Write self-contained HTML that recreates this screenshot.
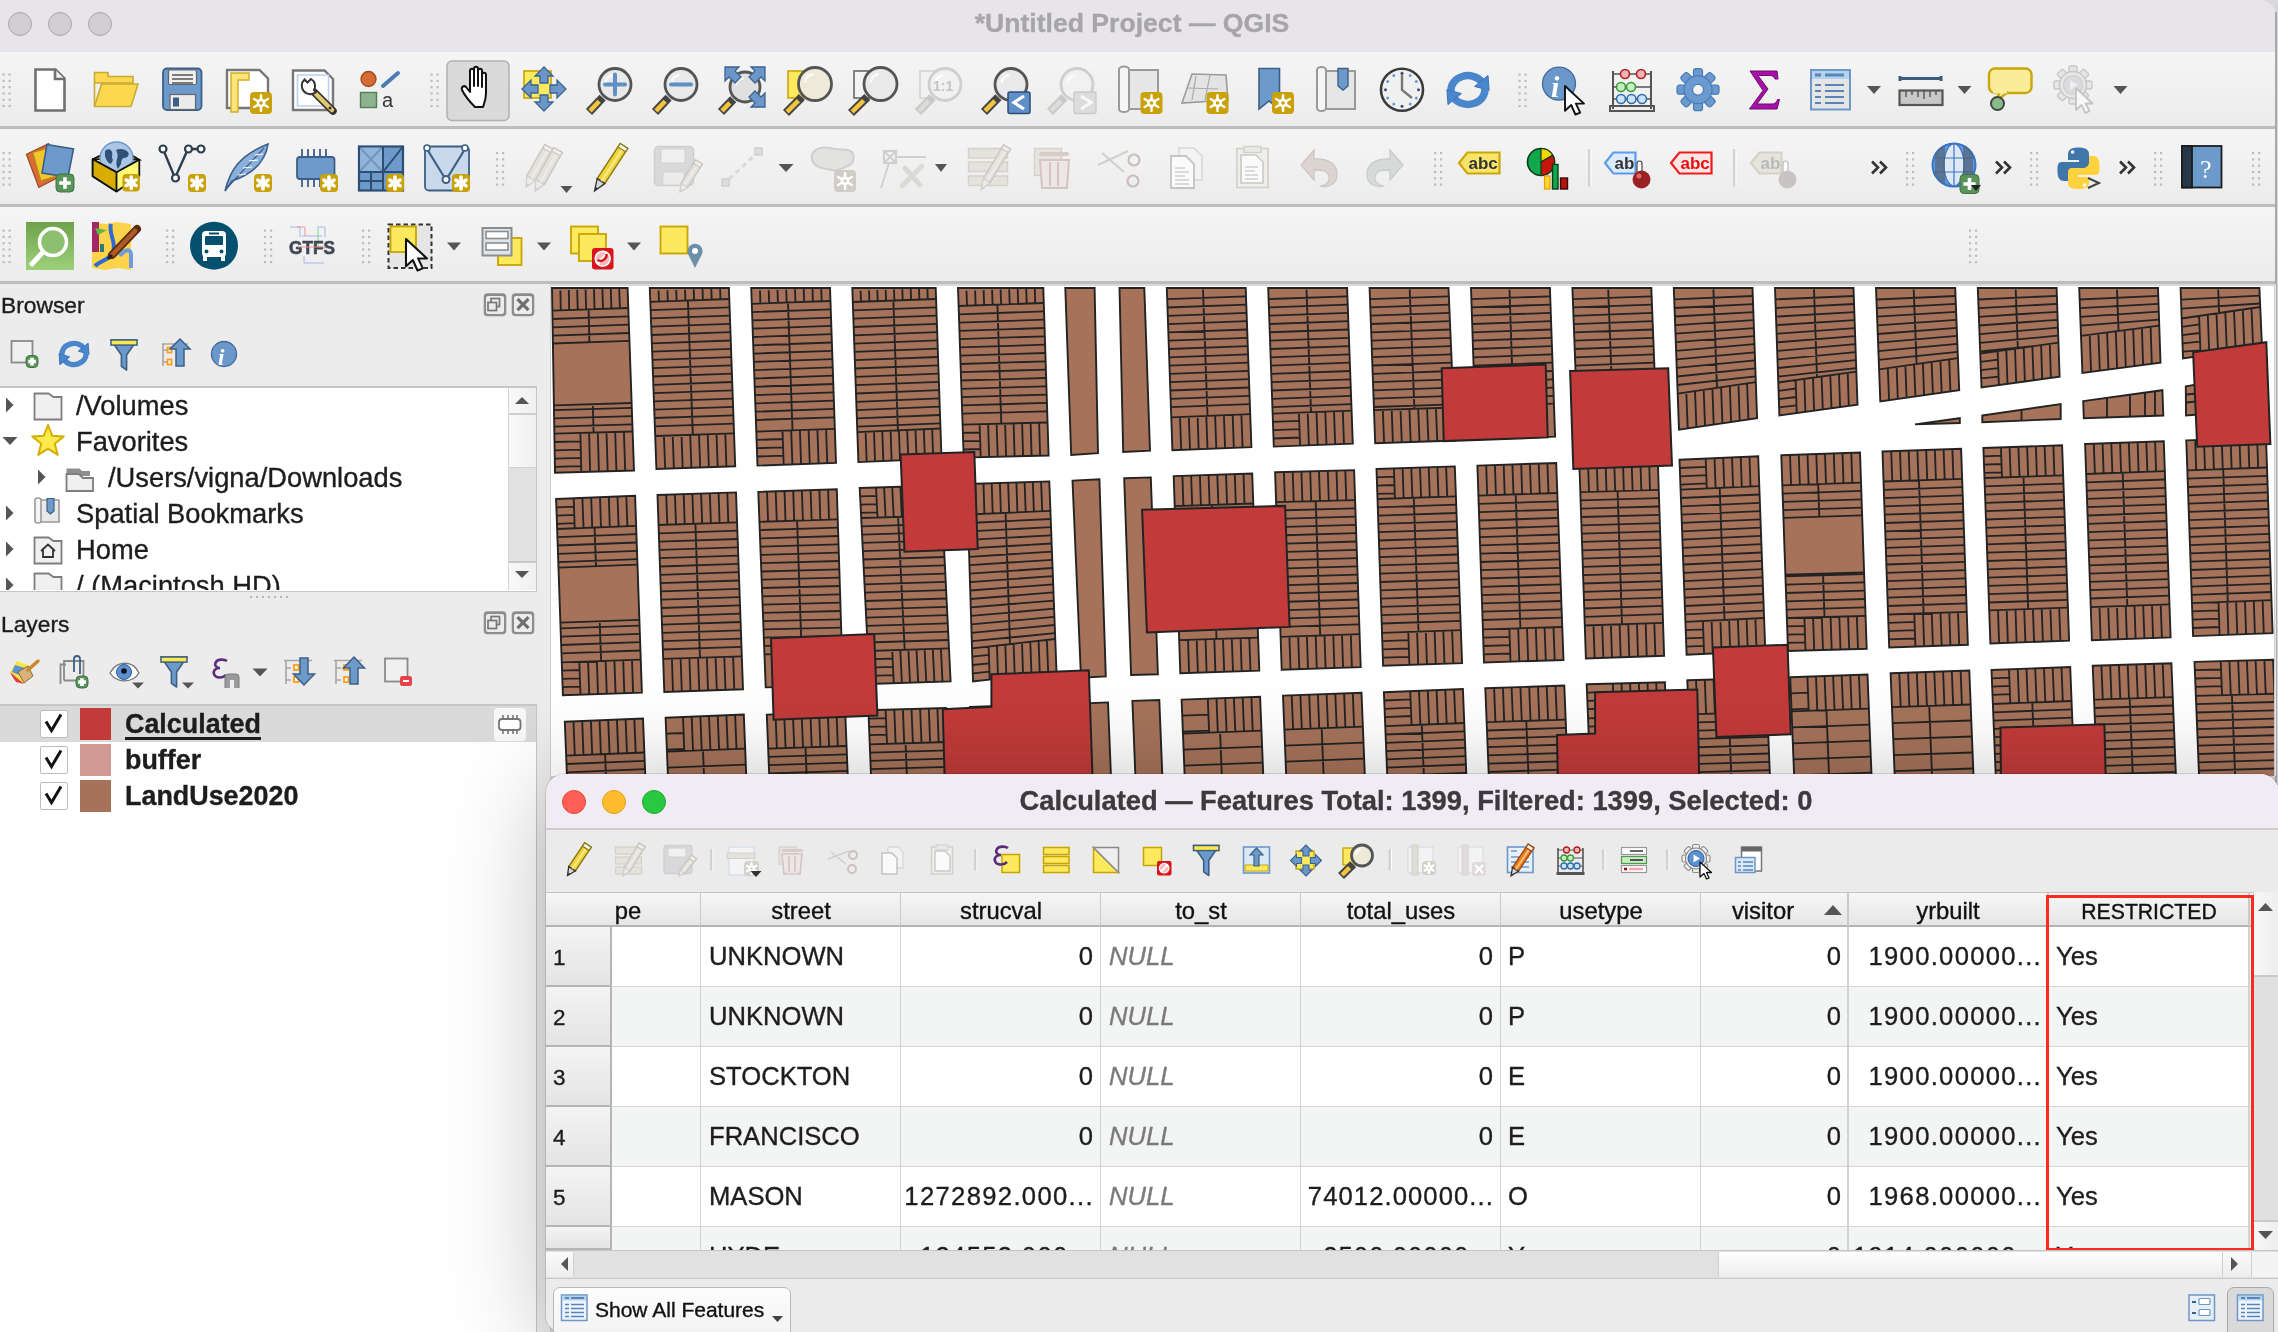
<!DOCTYPE html><html><head><meta charset="utf-8"><style>
html,body{margin:0;padding:0;width:2278px;height:1332px;overflow:hidden;background:#ececec;font-family:"Liberation Sans",sans-serif}
.t{position:absolute;white-space:nowrap;line-height:1;will-change:transform;-webkit-text-stroke:0.35px currentColor}
.b{position:absolute;box-sizing:border-box}
.ic{position:absolute;overflow:visible}
</style></head><body>
<div class="b" style="left:0.0px;top:0.0px;width:2278.0px;height:1332.0px;background:#d9d8db"></div>
<div class="b" style="left:0.0px;top:0.0px;width:2276.0px;height:52.0px;background:#e7e5e9;border-top-right-radius:16px"></div>
<div class="b" style="left:8.0px;top:12.0px;width:24.0px;height:24.0px;border-radius:50%;background:#d0ced2;border:1.2px solid #a9a7ab"></div>
<div class="b" style="left:48.0px;top:12.0px;width:24.0px;height:24.0px;border-radius:50%;background:#d0ced2;border:1.2px solid #a9a7ab"></div>
<div class="b" style="left:88.0px;top:12.0px;width:24.0px;height:24.0px;border-radius:50%;background:#d0ced2;border:1.2px solid #a9a7ab"></div>
<div class="t" style="left:732.0px;top:9.8px;width:800px;text-align:center;font-size:26.60px;color:#a7a5a9;font-weight:bold;font-style:normal;">*Untitled Project — QGIS</div>
<div class="b" style="left:2275.0px;top:12.0px;width:1.6px;height:1320.0px;background:#a9a8ab"></div>
<div class="b" style="left:0.0px;top:52.0px;width:2275.0px;height:74.0px;background:linear-gradient(#f5f5f5,#ececec)"></div>
<div class="b" style="left:0.0px;top:129.0px;width:2275.0px;height:75.0px;background:linear-gradient(#f5f5f5,#ececec)"></div>
<div class="b" style="left:0.0px;top:207.0px;width:2275.0px;height:74.0px;background:linear-gradient(#f5f5f5,#ececec)"></div>
<div class="b" style="left:0.0px;top:126.0px;width:2275.0px;height:2.5px;background:#bdbdbd"></div>
<div class="b" style="left:0.0px;top:204.0px;width:2275.0px;height:2.5px;background:#bdbdbd"></div>
<div class="b" style="left:0.0px;top:281.0px;width:2275.0px;height:2.5px;background:#bdbdbd"></div>
<svg class="ic" style="left:0;top:0" width="2278" height="284"><rect x="2.5" y="73.5" width="2.2" height="2.2" fill="#bdbdbd"/><rect x="8.5" y="73.5" width="2.2" height="2.2" fill="#bdbdbd"/><rect x="2.5" y="79.8" width="2.2" height="2.2" fill="#bdbdbd"/><rect x="8.5" y="79.8" width="2.2" height="2.2" fill="#bdbdbd"/><rect x="2.5" y="86.1" width="2.2" height="2.2" fill="#bdbdbd"/><rect x="8.5" y="86.1" width="2.2" height="2.2" fill="#bdbdbd"/><rect x="2.5" y="92.4" width="2.2" height="2.2" fill="#bdbdbd"/><rect x="8.5" y="92.4" width="2.2" height="2.2" fill="#bdbdbd"/><rect x="2.5" y="98.7" width="2.2" height="2.2" fill="#bdbdbd"/><rect x="8.5" y="98.7" width="2.2" height="2.2" fill="#bdbdbd"/><rect x="2.5" y="105.0" width="2.2" height="2.2" fill="#bdbdbd"/><rect x="8.5" y="105.0" width="2.2" height="2.2" fill="#bdbdbd"/><path d="M35.5 69.5H55.5L64.5 78.5V110.5H35.5Z" fill="#fff" stroke="#707070" stroke-width="2.6"/><path d="M55 69.5V79H64.5" fill="#f0f0f0" stroke="#707070" stroke-width="2.6"/><path d="M94.5 106.5V72.5H108V76.5H133V83H94.5Z" fill="#fdd84f" stroke="#c8ab36" stroke-width="1.6"/><path d="M94.5 106.5L101.5 84H138L131 106.5Z" fill="#fdd84f" stroke="#c8ab36" stroke-width="1.6"/><rect x="163" y="68.5" width="38.5" height="41.5" rx="4" fill="#6c9bcb" stroke="#3e5f85" stroke-width="1.8"/><rect x="168.5" y="70" width="28" height="14.5" rx="1.5" fill="#f0f0f0" stroke="#666" stroke-width="1.2"/><path d="M172 75h21M172 79h21M172 83h21" stroke="#555" stroke-width="1.3"/><rect x="170" y="94.5" width="25.5" height="15" fill="#ececec" stroke="#666" stroke-width="1.2"/><rect x="173" y="97.5" width="6" height="9" fill="#3e5f85"/><path d="M227 70H259.5L268 78.5V108H227Z" fill="#fff" stroke="#777" stroke-width="2.4"/><path d="M231 73H249V80H238V112H231Z" fill="#fce57d" stroke="#d3ae23" stroke-width="1.4"/><rect x="250.0" y="92.0" width="22.0" height="22.0" rx="4" fill="#c9a209"/><g stroke="#fff" stroke-width="2.4" stroke-linecap="round"><line x1="261.0" y1="103.0" x2="261.0" y2="110.9"/><line x1="261.0" y1="103.0" x2="254.1" y2="107.0"/><line x1="261.0" y1="103.0" x2="254.1" y2="99.0"/><line x1="261.0" y1="103.0" x2="261.0" y2="95.1"/><line x1="261.0" y1="103.0" x2="267.9" y2="99.0"/><line x1="261.0" y1="103.0" x2="267.9" y2="107.0"/></g><circle cx="261.0" cy="103.0" r="4.4" fill="#fff"/><circle cx="261.0" cy="103.0" r="1.8" fill="#c9a209"/><path d="M293 70.5H324.5L333 79V110H293Z" fill="#fff" stroke="#777" stroke-width="2.4"/><rect x="297.5" y="75" width="31" height="31" fill="none" stroke="#b9cdf2" stroke-width="1.5"/><path d="M314 92L333 111" stroke="#333" stroke-width="7.5" stroke-linecap="round"/><path d="M316 94L332 110" stroke="#e3c86d" stroke-width="4.5" stroke-linecap="round"/><path d="M304.5 79.5a8 8 0 0 0 11.5 12.5l-2 -2a8 8 0 0 0 -3 -11l-3.5 3.5l-3 -3z" fill="#fff" stroke="#333" stroke-width="2"/><circle cx="330" cy="108" r="1.5" fill="#333"/><circle cx="368.5" cy="79" r="7.5" fill="#d66b36" stroke="#9b4a23" stroke-width="1.3"/><path d="M383 86L398 73" stroke="#4c7bb3" stroke-width="4" stroke-linecap="round"/><rect x="360.5" y="92.5" width="16" height="15" fill="#8fb28e" stroke="#4f7f4f" stroke-width="1.4"/><text x="382" y="107" font-family="Liberation Sans" font-size="20" fill="#333">a</text><rect x="430.5" y="73.5" width="2.2" height="2.2" fill="#bdbdbd"/><rect x="436.5" y="73.5" width="2.2" height="2.2" fill="#bdbdbd"/><rect x="430.5" y="79.8" width="2.2" height="2.2" fill="#bdbdbd"/><rect x="436.5" y="79.8" width="2.2" height="2.2" fill="#bdbdbd"/><rect x="430.5" y="86.1" width="2.2" height="2.2" fill="#bdbdbd"/><rect x="436.5" y="86.1" width="2.2" height="2.2" fill="#bdbdbd"/><rect x="430.5" y="92.4" width="2.2" height="2.2" fill="#bdbdbd"/><rect x="436.5" y="92.4" width="2.2" height="2.2" fill="#bdbdbd"/><rect x="430.5" y="98.7" width="2.2" height="2.2" fill="#bdbdbd"/><rect x="436.5" y="98.7" width="2.2" height="2.2" fill="#bdbdbd"/><rect x="430.5" y="105.0" width="2.2" height="2.2" fill="#bdbdbd"/><rect x="436.5" y="105.0" width="2.2" height="2.2" fill="#bdbdbd"/><rect x="447" y="61" width="62" height="59.5" rx="5" fill="#dadada" stroke="#b1b1b1" stroke-width="1.5"/><path d="M475 107C470 102 465 96 462 90C461 87 464 85 466 87L470 92V71C470 68 474 68 474 71V86V69C474 66 478 66 478 69V86V71C478 68 482 68 482 71V87V75C482 72 486 72 486 75V93C486 100 484 104 483 107Z" fill="#fff" stroke="#111" stroke-width="2" stroke-linejoin="round"/><rect x="524" y="71" width="27" height="27" fill="#fde95e" stroke="#c7a400" stroke-width="1.6"/><g transform="translate(544 77)"><path d="M0 -10L-9 -1H-4V6H4V-1H9Z" fill="#6a97c8" stroke="#3d6390" stroke-width="1.3"/></g><g transform="translate(544 101) rotate(180)"><path d="M0 -10L-9 -1H-4V6H4V-1H9Z" fill="#6a97c8" stroke="#3d6390" stroke-width="1.3"/></g><g transform="translate(532 89) rotate(-90)"><path d="M0 -10L-9 -1H-4V6H4V-1H9Z" fill="#6a97c8" stroke="#3d6390" stroke-width="1.3"/></g><g transform="translate(556 89) rotate(90)"><path d="M0 -10L-9 -1H-4V6H4V-1H9Z" fill="#6a97c8" stroke="#3d6390" stroke-width="1.3"/></g><line x1="602.6" y1="97.6" x2="589.0" y2="112.0" stroke="#444" stroke-width="8.5" stroke-linecap="butt"/><line x1="599.2" y1="101.2" x2="590.0" y2="110.9" stroke="#f2c53d" stroke-width="4.5"/><circle cx="615.0" cy="84.5" r="16.0" fill="#e9e9e9" stroke="#555" stroke-width="2.8"/><path d="M605.4 82.9a9.6 9.6 0 0 1 8.0 -8.0" fill="none" stroke="#fff" stroke-width="2.5" opacity="0.8"/><path d="M605 84.5h20M615 74.5v20" stroke="#5f8fc5" stroke-width="4" stroke-linecap="round"/><line x1="668.6" y1="97.6" x2="655.0" y2="112.0" stroke="#444" stroke-width="8.5" stroke-linecap="butt"/><line x1="665.2" y1="101.2" x2="656.0" y2="110.9" stroke="#f2c53d" stroke-width="4.5"/><circle cx="681.0" cy="84.5" r="16.0" fill="#e9e9e9" stroke="#555" stroke-width="2.8"/><path d="M671.4 82.9a9.6 9.6 0 0 1 8.0 -8.0" fill="none" stroke="#fff" stroke-width="2.5" opacity="0.8"/><path d="M671 84.5h20" stroke="#5f8fc5" stroke-width="4" stroke-linecap="round"/><line x1="733.2" y1="99.3" x2="721.0" y2="112.0" stroke="#444" stroke-width="8.5" stroke-linecap="butt"/><line x1="729.8" y1="102.9" x2="722.0" y2="110.9" stroke="#f2c53d" stroke-width="4.5"/><circle cx="745.0" cy="87.0" r="15.0" fill="#e0e0e0" stroke="#555" stroke-width="2.8"/><path d="M736.0 85.5a9.0 9.0 0 0 1 7.5 -7.5" fill="none" stroke="#fff" stroke-width="2.5" opacity="0.8"/><g transform="translate(725 67)"><path d="M0 0H14L10 4L16 10L10 16L4 10L0 14Z" fill="#6a97c8" stroke="#3d6390" stroke-width="1.3"/></g><g transform="translate(765 67) scale(-1 1)"><path d="M0 0H14L10 4L16 10L10 16L4 10L0 14Z" fill="#6a97c8" stroke="#3d6390" stroke-width="1.3"/></g><g transform="translate(765 107) scale(-1 -1)"><path d="M0 0H14L10 4L16 10L10 16L4 10L0 14Z" fill="#6a97c8" stroke="#3d6390" stroke-width="1.3"/></g><rect x="788" y="71" width="22" height="27" fill="#fde95e" stroke="#c7a400" stroke-width="1.5"/><line x1="801.9" y1="97.1" x2="786.0" y2="113.0" stroke="#444" stroke-width="8.5" stroke-linecap="butt"/><line x1="798.4" y1="100.6" x2="787.1" y2="111.9" stroke="#f2c53d" stroke-width="4.5"/><circle cx="815.0" cy="84.0" r="16.5" fill="#eeeada" stroke="#555" stroke-width="2.8"/><path d="M805.1 82.3a9.9 9.9 0 0 1 8.2 -8.2" fill="none" stroke="#fff" stroke-width="2.5" opacity="0.8"/><rect x="854" y="71" width="24" height="27" fill="#f2f2f2" stroke="#777" stroke-width="1.8"/><line x1="867.3" y1="97.0" x2="851.0" y2="113.0" stroke="#444" stroke-width="8.5" stroke-linecap="butt"/><line x1="863.7" y1="100.5" x2="852.1" y2="111.9" stroke="#f2c53d" stroke-width="4.5"/><circle cx="880.5" cy="84.0" r="16.5" fill="#e9e9e9" stroke="#555" stroke-width="2.8"/><path d="M870.6 82.3a9.9 9.9 0 0 1 8.2 -8.2" fill="none" stroke="#fff" stroke-width="2.5" opacity="0.8"/><rect x="920" y="71" width="22" height="27" fill="#f2f2f2" stroke="#d4d4d4" stroke-width="1.6"/><line x1="932.4" y1="97.3" x2="918.0" y2="112.0" stroke="#c8c8c8" stroke-width="8.5" stroke-linecap="butt"/><line x1="928.9" y1="100.9" x2="919.1" y2="110.9" stroke="#dcdcd8" stroke-width="4.5"/><circle cx="945.0" cy="84.5" r="16.0" fill="#f1f1f1" stroke="#cfcfcf" stroke-width="2.8"/><path d="M935.4 82.9a9.6 9.6 0 0 1 8.0 -8.0" fill="none" stroke="#fff" stroke-width="2.5" opacity="0.8"/><text x="933" y="91" font-family="Liberation Sans" font-weight="bold" font-size="14" fill="#c4c4c4">1:1</text><line x1="998.4" y1="97.3" x2="984.0" y2="112.0" stroke="#444" stroke-width="8.5" stroke-linecap="butt"/><line x1="994.9" y1="100.9" x2="985.1" y2="110.9" stroke="#f2c53d" stroke-width="4.5"/><circle cx="1011.0" cy="84.5" r="16.0" fill="#e9e9e9" stroke="#555" stroke-width="2.8"/><path d="M1001.4 82.9a9.6 9.6 0 0 1 8.0 -8.0" fill="none" stroke="#fff" stroke-width="2.5" opacity="0.8"/><rect x="1008" y="92" width="22" height="21.5" rx="2" fill="#5e8fc9" stroke="#2e4d73" stroke-width="1.5"/><path d="M1024 96L1014 102.5L1024 109" fill="none" stroke="#fff" stroke-width="3.2"/><line x1="1064.4" y1="97.3" x2="1050.0" y2="112.0" stroke="#c8c8c8" stroke-width="8.5" stroke-linecap="butt"/><line x1="1060.9" y1="100.9" x2="1051.1" y2="110.9" stroke="#dcdcd8" stroke-width="4.5"/><circle cx="1077.0" cy="84.5" r="16.0" fill="#f1f1f1" stroke="#cfcfcf" stroke-width="2.8"/><path d="M1067.4 82.9a9.6 9.6 0 0 1 8.0 -8.0" fill="none" stroke="#fff" stroke-width="2.5" opacity="0.8"/><rect x="1074" y="92" width="22" height="21.5" rx="2" fill="#dcdcdc" stroke="#c9c9c9" stroke-width="1.3"/><path d="M1081 96L1091 102.5L1081 109" fill="none" stroke="#f8f8f8" stroke-width="3.2"/><path d="M1124 70H1158V109H1124Z" fill="#e6e6e6" stroke="#9a9a9a" stroke-width="2"/><path d="M1119 69.5a5 3 0 0 1 10 0V109a5 3 0 0 1 -10 0Z" fill="#f5f5f5" stroke="#9a9a9a" stroke-width="2"/><rect x="1140.5" y="92.0" width="22.0" height="22.0" rx="4" fill="#c9a209"/><g stroke="#fff" stroke-width="2.4" stroke-linecap="round"><line x1="1151.5" y1="103.0" x2="1151.5" y2="110.9"/><line x1="1151.5" y1="103.0" x2="1144.6" y2="107.0"/><line x1="1151.5" y1="103.0" x2="1144.6" y2="99.0"/><line x1="1151.5" y1="103.0" x2="1151.5" y2="95.1"/><line x1="1151.5" y1="103.0" x2="1158.4" y2="99.0"/><line x1="1151.5" y1="103.0" x2="1158.4" y2="107.0"/></g><circle cx="1151.5" cy="103.0" r="4.4" fill="#fff"/><circle cx="1151.5" cy="103.0" r="1.8" fill="#c9a209"/><path d="M1182 103L1192 74L1226 75L1228 100Z" fill="#e3e3e3" stroke="#9c9c9c" stroke-width="1.6"/><path d="M1188 88l30 1M1196 76l-4 24M1210 75l-5 25" stroke="#a8a8a8" stroke-width="1.2" fill="none"/><rect x="1206.5" y="92.0" width="22.0" height="22.0" rx="4" fill="#c9a209"/><g stroke="#fff" stroke-width="2.4" stroke-linecap="round"><line x1="1217.5" y1="103.0" x2="1217.5" y2="110.9"/><line x1="1217.5" y1="103.0" x2="1210.6" y2="107.0"/><line x1="1217.5" y1="103.0" x2="1210.6" y2="99.0"/><line x1="1217.5" y1="103.0" x2="1217.5" y2="95.1"/><line x1="1217.5" y1="103.0" x2="1224.4" y2="99.0"/><line x1="1217.5" y1="103.0" x2="1224.4" y2="107.0"/></g><circle cx="1217.5" cy="103.0" r="4.4" fill="#fff"/><circle cx="1217.5" cy="103.0" r="1.8" fill="#c9a209"/><path d="M1259 68.5H1279.5V109L1269 101L1259 109Z" fill="#6c9bcb" stroke="#3e5f85" stroke-width="1.6" transform="translate(0 0)"/><rect x="1272.0" y="92.0" width="22.0" height="22.0" rx="4" fill="#c9a209"/><g stroke="#fff" stroke-width="2.4" stroke-linecap="round"><line x1="1283.0" y1="103.0" x2="1283.0" y2="110.9"/><line x1="1283.0" y1="103.0" x2="1276.1" y2="107.0"/><line x1="1283.0" y1="103.0" x2="1276.1" y2="99.0"/><line x1="1283.0" y1="103.0" x2="1283.0" y2="95.1"/><line x1="1283.0" y1="103.0" x2="1289.9" y2="99.0"/><line x1="1283.0" y1="103.0" x2="1289.9" y2="107.0"/></g><circle cx="1283.0" cy="103.0" r="4.4" fill="#fff"/><circle cx="1283.0" cy="103.0" r="1.8" fill="#c9a209"/><path d="M1321 71H1355V109H1321Z" fill="#e6e6e6" stroke="#9a9a9a" stroke-width="2"/><path d="M1317 70a4.5 3 0 0 1 9 0V108a4.5 3 0 0 1 -9 0Z" fill="#f5f5f5" stroke="#9a9a9a" stroke-width="2"/><path d="M1338 68.5H1348V86L1343 90L1338 86Z" fill="#6c9bcb" stroke="#3e5f85" stroke-width="1.4"/><circle cx="1402" cy="89.7" r="21" fill="#f0f0f0" stroke="#3a3a3a" stroke-width="2.6"/><circle cx="1418.5" cy="89.7" r="1.5" fill="#2f4d7a"/><circle cx="1416.3" cy="98.0" r="1.5" fill="#6d9bd0"/><circle cx="1410.2" cy="104.0" r="1.5" fill="#6d9bd0"/><circle cx="1402.0" cy="106.2" r="1.5" fill="#2f4d7a"/><circle cx="1393.8" cy="104.0" r="1.5" fill="#6d9bd0"/><circle cx="1387.7" cy="98.0" r="1.5" fill="#6d9bd0"/><circle cx="1385.5" cy="89.7" r="1.5" fill="#2f4d7a"/><circle cx="1387.7" cy="81.5" r="1.5" fill="#6d9bd0"/><circle cx="1393.8" cy="75.4" r="1.5" fill="#6d9bd0"/><circle cx="1402.0" cy="73.2" r="1.5" fill="#2f4d7a"/><circle cx="1410.2" cy="75.4" r="1.5" fill="#6d9bd0"/><circle cx="1416.3" cy="81.4" r="1.5" fill="#6d9bd0"/><path d="M1402 74V90L1412 98" fill="none" stroke="#777" stroke-width="2.4"/><path d="M1451.1 91.3A17.0 14.5 0 0 1 1481.9 81.7" fill="none" stroke="#4a86cc" stroke-width="7.5"/><path d="M1489.1 90.4L1474.6 86.4L1488.0 75.4Z" fill="#4a86cc" stroke="#3a74b8" stroke-width="1"/><path d="M1484.9 88.7A17.0 14.5 0 0 1 1454.1 98.3" fill="none" stroke="#4a86cc" stroke-width="7.5"/><path d="M1446.9 89.6L1461.4 93.6L1448.0 104.6Z" fill="#4a86cc" stroke="#3a74b8" stroke-width="1"/><rect x="1518.5" y="73.5" width="2.2" height="2.2" fill="#bdbdbd"/><rect x="1524.5" y="73.5" width="2.2" height="2.2" fill="#bdbdbd"/><rect x="1518.5" y="79.8" width="2.2" height="2.2" fill="#bdbdbd"/><rect x="1524.5" y="79.8" width="2.2" height="2.2" fill="#bdbdbd"/><rect x="1518.5" y="86.1" width="2.2" height="2.2" fill="#bdbdbd"/><rect x="1524.5" y="86.1" width="2.2" height="2.2" fill="#bdbdbd"/><rect x="1518.5" y="92.4" width="2.2" height="2.2" fill="#bdbdbd"/><rect x="1524.5" y="92.4" width="2.2" height="2.2" fill="#bdbdbd"/><rect x="1518.5" y="98.7" width="2.2" height="2.2" fill="#bdbdbd"/><rect x="1524.5" y="98.7" width="2.2" height="2.2" fill="#bdbdbd"/><rect x="1518.5" y="105.0" width="2.2" height="2.2" fill="#bdbdbd"/><rect x="1524.5" y="105.0" width="2.2" height="2.2" fill="#bdbdbd"/><circle cx="1559" cy="83.6" r="16.5" fill="#6a98ca" stroke="#44699a" stroke-width="1.3"/><text x="1551" y="97" font-family="Liberation Serif" font-style="italic" font-weight="bold" font-size="30" fill="#fff">i</text><g transform="translate(1565.0 86.0) scale(0.950)"><path d="M0 0L0 26L6.5 20L11 30L16 28L11.5 18.5L20 18.5Z" fill="#fff" stroke="#111" stroke-width="2" stroke-linejoin="round"/></g><path d="M1613 71V109M1651 71V109" stroke="#555" stroke-width="2"/><rect x="1610" y="106" width="44" height="5" fill="none" stroke="#555" stroke-width="2"/><path d="M1613 74h38M1613 87h38M1613 99h38" stroke="#555" stroke-width="1.6"/><circle cx="1625" cy="74" r="4.5" fill="#f3b5b5" stroke="#b01e1e" stroke-width="1.6"/><circle cx="1641" cy="74" r="4.5" fill="#f3b5b5" stroke="#b01e1e" stroke-width="1.6"/><circle cx="1621" cy="87" r="4.5" fill="#c6efc0" stroke="#3c9a3c" stroke-width="1.6"/><circle cx="1631" cy="87" r="4.5" fill="#c6efc0" stroke="#3c9a3c" stroke-width="1.6"/><circle cx="1621.0" cy="99" r="4.5" fill="#cde3f7" stroke="#2f6ea8" stroke-width="1.6"/><circle cx="1631.5" cy="99" r="4.5" fill="#cde3f7" stroke="#2f6ea8" stroke-width="1.6"/><circle cx="1642.0" cy="99" r="4.5" fill="#cde3f7" stroke="#2f6ea8" stroke-width="1.6"/><g transform="translate(1698 89.7)"><rect x="-4.5" y="-21" width="9" height="10" rx="2.5" fill="#6b9ad0" stroke="#4a7bb6" stroke-width="1.2" transform="rotate(0)"/><rect x="-4.5" y="-21" width="9" height="10" rx="2.5" fill="#6b9ad0" stroke="#4a7bb6" stroke-width="1.2" transform="rotate(45)"/><rect x="-4.5" y="-21" width="9" height="10" rx="2.5" fill="#6b9ad0" stroke="#4a7bb6" stroke-width="1.2" transform="rotate(90)"/><rect x="-4.5" y="-21" width="9" height="10" rx="2.5" fill="#6b9ad0" stroke="#4a7bb6" stroke-width="1.2" transform="rotate(135)"/><rect x="-4.5" y="-21" width="9" height="10" rx="2.5" fill="#6b9ad0" stroke="#4a7bb6" stroke-width="1.2" transform="rotate(180)"/><rect x="-4.5" y="-21" width="9" height="10" rx="2.5" fill="#6b9ad0" stroke="#4a7bb6" stroke-width="1.2" transform="rotate(225)"/><rect x="-4.5" y="-21" width="9" height="10" rx="2.5" fill="#6b9ad0" stroke="#4a7bb6" stroke-width="1.2" transform="rotate(270)"/><rect x="-4.5" y="-21" width="9" height="10" rx="2.5" fill="#6b9ad0" stroke="#4a7bb6" stroke-width="1.2" transform="rotate(315)"/><circle r="14" fill="#6b9ad0" stroke="#4a7bb6" stroke-width="1.2"/><circle r="5.5" fill="#f2f2f2" stroke="#4a7bb6" stroke-width="1.2"/></g><path d="M1750 71H1777L1778 79H1775C1774 76 1772 75.5 1768 75.5H1758L1768 89L1757 104H1771C1775 104 1776 103 1777.5 99.5H1779.5L1777 109H1749.5L1763 90.5Z" fill="#a811a8" stroke="#6d0a6d" stroke-width="1"/><rect x="1811" y="70" width="39" height="39.5" fill="#e5e5e5" stroke="#6c98c8" stroke-width="2"/><rect x="1812" y="71" width="37" height="8" fill="#b3d2ee"/><path d="M1815 75h6M1825 75h19" stroke="#5a85b8" stroke-width="3"/><path d="M1815 85h6M1825 85h19" stroke="#5a85b8" stroke-width="1.8"/><path d="M1815 91h6M1825 91h19" stroke="#5a85b8" stroke-width="1.8"/><path d="M1815 97h6M1825 97h19" stroke="#5a85b8" stroke-width="1.8"/><path d="M1815 103h6M1825 103h19" stroke="#5a85b8" stroke-width="1.8"/><path d="M1867.0 86.0L1881.0 86.0L1874.0 94.0Z" fill="#555"/><path d="M1900 76V81M1941 76V81M1900 78.5H1941" stroke="#3d5b7c" stroke-width="3"/><rect x="1899.5" y="90.5" width="43" height="14.5" fill="#c8c8c8" stroke="#555" stroke-width="2.2"/><path d="M1906 91v6M1912 91v4M1918 91v6M1924 91v8M1930 91v6M1936 91v4" stroke="#555" stroke-width="1.4"/><path d="M1957.5 86.0L1971.5 86.0L1964.5 94.0Z" fill="#555"/><rect x="1989" y="68.5" width="42.5" height="24.5" rx="6" fill="#faec98" stroke="#c9a60e" stroke-width="2.4"/><path d="M2000 92L1995 102L2008 92" fill="#faec98" stroke="#c9a60e" stroke-width="2.4" stroke-linejoin="round"/><rect x="1993" y="91" width="14" height="2.5" fill="#faec98"/><circle cx="1997.5" cy="103.5" r="6.5" fill="#86bd86" stroke="#444" stroke-width="2"/><g transform="translate(2073 85)"><rect x="-4" y="-19" width="8" height="9" rx="2" fill="#e6e6e6" stroke="#c8c8c8" stroke-width="1.4" transform="rotate(0)"/><rect x="-4" y="-19" width="8" height="9" rx="2" fill="#e6e6e6" stroke="#c8c8c8" stroke-width="1.4" transform="rotate(45)"/><rect x="-4" y="-19" width="8" height="9" rx="2" fill="#e6e6e6" stroke="#c8c8c8" stroke-width="1.4" transform="rotate(90)"/><rect x="-4" y="-19" width="8" height="9" rx="2" fill="#e6e6e6" stroke="#c8c8c8" stroke-width="1.4" transform="rotate(135)"/><rect x="-4" y="-19" width="8" height="9" rx="2" fill="#e6e6e6" stroke="#c8c8c8" stroke-width="1.4" transform="rotate(180)"/><rect x="-4" y="-19" width="8" height="9" rx="2" fill="#e6e6e6" stroke="#c8c8c8" stroke-width="1.4" transform="rotate(225)"/><rect x="-4" y="-19" width="8" height="9" rx="2" fill="#e6e6e6" stroke="#c8c8c8" stroke-width="1.4" transform="rotate(270)"/><rect x="-4" y="-19" width="8" height="9" rx="2" fill="#e6e6e6" stroke="#c8c8c8" stroke-width="1.4" transform="rotate(315)"/><circle r="13.5" fill="#e6e6e6" stroke="#c8c8c8" stroke-width="1.4"/><circle r="9.5" fill="#d9dadd" stroke="#cfcfcf" stroke-width="1.2"/><path d="M-3 -5L5 0L-3 5Z" fill="#eee"/></g><g transform="translate(2076.0 88.0)"><path d="M0 0L0 22L5.5 17L9.5 25L13.5 23L9.5 15.5L16.5 15.5Z" fill="#f7f7f7" stroke="#c4c4c4" stroke-width="1.8" stroke-linejoin="round"/></g><path d="M2113.5 86.0L2127.5 86.0L2120.5 94.0Z" fill="#555"/><rect x="2.5" y="152.0" width="2.2" height="2.2" fill="#bdbdbd"/><rect x="8.5" y="152.0" width="2.2" height="2.2" fill="#bdbdbd"/><rect x="2.5" y="158.3" width="2.2" height="2.2" fill="#bdbdbd"/><rect x="8.5" y="158.3" width="2.2" height="2.2" fill="#bdbdbd"/><rect x="2.5" y="164.6" width="2.2" height="2.2" fill="#bdbdbd"/><rect x="8.5" y="164.6" width="2.2" height="2.2" fill="#bdbdbd"/><rect x="2.5" y="170.9" width="2.2" height="2.2" fill="#bdbdbd"/><rect x="8.5" y="170.9" width="2.2" height="2.2" fill="#bdbdbd"/><rect x="2.5" y="177.2" width="2.2" height="2.2" fill="#bdbdbd"/><rect x="8.5" y="177.2" width="2.2" height="2.2" fill="#bdbdbd"/><rect x="2.5" y="183.5" width="2.2" height="2.2" fill="#bdbdbd"/><rect x="8.5" y="183.5" width="2.2" height="2.2" fill="#bdbdbd"/><path d="M27 141L50 132L60 165L37 175Z" fill="#d96b36" stroke="#9e4a22" stroke-width="1.2" transform="translate(0 12) rotate(-4 45 150)"/><path d="M34 151L56 147L61 176L39 180Z" fill="#f1c72d" stroke="#b58f14" stroke-width="1.2" transform="rotate(-6 48 163)"/><path d="M47 144.5L73.5 149L68 177L42 173Z" fill="#6c9bcb" stroke="#3e5f85" stroke-width="1.6"/><rect x="56.0" y="174.0" width="18.0" height="18.0" rx="4" fill="#5b945b" stroke="#3f7440" stroke-width="1"/><path d="M59.2 183.0h11.5M65.0 177.2v11.5" stroke="#fff" stroke-width="3.6"/><path d="M92.7 159.2L104 153.5L129 153.5L139.3 159.6Z" fill="#8a7000" stroke="#111" stroke-width="1.6"/><circle cx="116.5" cy="158.5" r="16.5" fill="#a9c6e6" stroke="#6b98cc" stroke-width="1.3"/><path d="M105 151c3-3 6-2 7 1c1 3-1 5 1 8l-2 4c-3-1-5-4-6-8ZM116 150c4-2 9-1 12 2c2 3-1 6-4 6c-2 0-3 3-3 6l-3 5c-2-3-2-7-1-10c1-3 1-5-1-9Z" fill="#2f5078"/><path d="M92.7 159.2L116.5 172.2L139.3 159.6V176L116.5 191.4L92.7 176.3Z" fill="#fdf976" stroke="#111" stroke-width="1.8" stroke-linejoin="round"/><path d="M92.7 159.2L116.5 172.2V191.4L92.7 176.3Z" fill="#d8ad00" stroke="#111" stroke-width="1.8" stroke-linejoin="round"/><rect x="122.4" y="174.0" width="17.5" height="17.5" rx="4" fill="#c9a209"/><ellipse cx="131.2" cy="187.1" rx="1.9" ry="3.2" fill="#fff" transform="rotate(180.0 131.2 187.1)"/><ellipse cx="127.4" cy="184.9" rx="1.9" ry="3.2" fill="#fff" transform="rotate(240.0 127.4 184.9)"/><ellipse cx="127.4" cy="180.6" rx="1.9" ry="3.2" fill="#fff" transform="rotate(300.0 127.4 180.6)"/><ellipse cx="131.2" cy="178.4" rx="1.9" ry="3.2" fill="#fff" transform="rotate(360.0 131.2 178.4)"/><ellipse cx="134.9" cy="180.6" rx="1.9" ry="3.2" fill="#fff" transform="rotate(420.0 134.9 180.6)"/><ellipse cx="134.9" cy="184.9" rx="1.9" ry="3.2" fill="#fff" transform="rotate(480.0 134.9 184.9)"/><circle cx="131.2" cy="182.8" r="2" fill="#fff"/><path d="M163 149L175 178L188 149L201 149" fill="none" stroke="#2d3e50" stroke-width="2.4"/><circle cx="163" cy="149" r="3.5" fill="#fff" stroke="#2d3e50" stroke-width="2.2"/><circle cx="175.5" cy="178" r="3.5" fill="#fff" stroke="#2d3e50" stroke-width="2.2"/><circle cx="188.5" cy="149" r="3.5" fill="#fff" stroke="#2d3e50" stroke-width="2.2"/><circle cx="201" cy="149" r="3.5" fill="#fff" stroke="#2d3e50" stroke-width="2.2"/><rect x="188.0" y="174.0" width="18.0" height="18.0" rx="4" fill="#c9a209"/><ellipse cx="197.0" cy="187.5" rx="1.9" ry="3.2" fill="#fff" transform="rotate(180.0 197.0 187.5)"/><ellipse cx="193.1" cy="185.2" rx="1.9" ry="3.2" fill="#fff" transform="rotate(240.0 193.1 185.2)"/><ellipse cx="193.1" cy="180.8" rx="1.9" ry="3.2" fill="#fff" transform="rotate(300.0 193.1 180.8)"/><ellipse cx="197.0" cy="178.5" rx="1.9" ry="3.2" fill="#fff" transform="rotate(360.0 197.0 178.5)"/><ellipse cx="200.9" cy="180.8" rx="1.9" ry="3.2" fill="#fff" transform="rotate(420.0 200.9 180.8)"/><ellipse cx="200.9" cy="185.2" rx="1.9" ry="3.2" fill="#fff" transform="rotate(480.0 200.9 185.2)"/><circle cx="197.0" cy="183.0" r="2" fill="#fff"/><path d="M225 191C230 170 240 155 268 144C266 158 258 172 232 181Z" fill="#8ab0dc" stroke="#3b5f8b" stroke-width="1.6"/><path d="M227 188L264 148" stroke="#3b5f8b" stroke-width="1.2"/><path d="M238 175l8 -1M243 168l9 -1M249 161l9 -1M255 155l8 -1" stroke="#fff" stroke-width="1.2"/><rect x="254.0" y="174.0" width="18.0" height="18.0" rx="4" fill="#c9a209"/><ellipse cx="263.0" cy="187.5" rx="1.9" ry="3.2" fill="#fff" transform="rotate(180.0 263.0 187.5)"/><ellipse cx="259.1" cy="185.2" rx="1.9" ry="3.2" fill="#fff" transform="rotate(240.0 259.1 185.2)"/><ellipse cx="259.1" cy="180.8" rx="1.9" ry="3.2" fill="#fff" transform="rotate(300.0 259.1 180.8)"/><ellipse cx="263.0" cy="178.5" rx="1.9" ry="3.2" fill="#fff" transform="rotate(360.0 263.0 178.5)"/><ellipse cx="266.9" cy="180.8" rx="1.9" ry="3.2" fill="#fff" transform="rotate(420.0 266.9 180.8)"/><ellipse cx="266.9" cy="185.2" rx="1.9" ry="3.2" fill="#fff" transform="rotate(480.0 266.9 185.2)"/><circle cx="263.0" cy="183.0" r="2" fill="#fff"/><rect x="297" y="157" width="37.5" height="22" rx="3" fill="#6c9bcb" stroke="#3e5f85" stroke-width="1.8"/><path d="M302 149v8M308 149v8M314 149v8M320 149v8M326 149v8M302 179v8M308 179v8M314 179v8M320 179v8" stroke="#3e5f85" stroke-width="1.8"/><rect x="320.0" y="174.0" width="18.0" height="18.0" rx="4" fill="#c9a209"/><ellipse cx="329.0" cy="187.5" rx="1.9" ry="3.2" fill="#fff" transform="rotate(180.0 329.0 187.5)"/><ellipse cx="325.1" cy="185.2" rx="1.9" ry="3.2" fill="#fff" transform="rotate(240.0 325.1 185.2)"/><ellipse cx="325.1" cy="180.8" rx="1.9" ry="3.2" fill="#fff" transform="rotate(300.0 325.1 180.8)"/><ellipse cx="329.0" cy="178.5" rx="1.9" ry="3.2" fill="#fff" transform="rotate(360.0 329.0 178.5)"/><ellipse cx="332.9" cy="180.8" rx="1.9" ry="3.2" fill="#fff" transform="rotate(420.0 332.9 180.8)"/><ellipse cx="332.9" cy="185.2" rx="1.9" ry="3.2" fill="#fff" transform="rotate(480.0 332.9 185.2)"/><circle cx="329.0" cy="183.0" r="2" fill="#fff"/><rect x="359" y="146.5" width="44" height="44" fill="#6c9bcb" stroke="#2e4d73" stroke-width="2.2"/><path d="M359 172H403M383 146.5V190.5M371 172V190.5M359 181H383M359 146.5L383 172M383 146.5L359 172M403 146.5L383 172" stroke="#2e4d73" stroke-width="2"/><rect x="360" y="147.5" width="22" height="23.5" fill="#a9c6e6" opacity="0.6"/><rect x="386.0" y="174.0" width="18.0" height="18.0" rx="4" fill="#c9a209"/><ellipse cx="395.0" cy="187.5" rx="1.9" ry="3.2" fill="#fff" transform="rotate(180.0 395.0 187.5)"/><ellipse cx="391.1" cy="185.2" rx="1.9" ry="3.2" fill="#fff" transform="rotate(240.0 391.1 185.2)"/><ellipse cx="391.1" cy="180.8" rx="1.9" ry="3.2" fill="#fff" transform="rotate(300.0 391.1 180.8)"/><ellipse cx="395.0" cy="178.5" rx="1.9" ry="3.2" fill="#fff" transform="rotate(360.0 395.0 178.5)"/><ellipse cx="398.9" cy="180.8" rx="1.9" ry="3.2" fill="#fff" transform="rotate(420.0 398.9 180.8)"/><ellipse cx="398.9" cy="185.2" rx="1.9" ry="3.2" fill="#fff" transform="rotate(480.0 398.9 185.2)"/><circle cx="395.0" cy="183.0" r="2" fill="#fff"/><rect x="425" y="146.5" width="44" height="44" rx="4" fill="#c9d8ea" stroke="#3e5f85" stroke-width="1.8"/><path d="M427 149L446 180L465 149" fill="none" stroke="#3e5f85" stroke-width="2.2"/><circle cx="446" cy="179.5" r="3.5" fill="#fff" stroke="#3e5f85" stroke-width="2"/><circle cx="465" cy="148" r="3" fill="#fff" stroke="#3e5f85" stroke-width="1.6"/><circle cx="427" cy="148" r="3" fill="#fff" stroke="#3e5f85" stroke-width="1.6"/><rect x="452.0" y="174.0" width="18.0" height="18.0" rx="4" fill="#c9a209"/><ellipse cx="461.0" cy="187.5" rx="1.9" ry="3.2" fill="#fff" transform="rotate(180.0 461.0 187.5)"/><ellipse cx="457.1" cy="185.2" rx="1.9" ry="3.2" fill="#fff" transform="rotate(240.0 457.1 185.2)"/><ellipse cx="457.1" cy="180.8" rx="1.9" ry="3.2" fill="#fff" transform="rotate(300.0 457.1 180.8)"/><ellipse cx="461.0" cy="178.5" rx="1.9" ry="3.2" fill="#fff" transform="rotate(360.0 461.0 178.5)"/><ellipse cx="464.9" cy="180.8" rx="1.9" ry="3.2" fill="#fff" transform="rotate(420.0 464.9 180.8)"/><ellipse cx="464.9" cy="185.2" rx="1.9" ry="3.2" fill="#fff" transform="rotate(480.0 464.9 185.2)"/><circle cx="461.0" cy="183.0" r="2" fill="#fff"/><rect x="496.0" y="152.0" width="2.2" height="2.2" fill="#bdbdbd"/><rect x="502.0" y="152.0" width="2.2" height="2.2" fill="#bdbdbd"/><rect x="496.0" y="158.3" width="2.2" height="2.2" fill="#bdbdbd"/><rect x="502.0" y="158.3" width="2.2" height="2.2" fill="#bdbdbd"/><rect x="496.0" y="164.6" width="2.2" height="2.2" fill="#bdbdbd"/><rect x="502.0" y="164.6" width="2.2" height="2.2" fill="#bdbdbd"/><rect x="496.0" y="170.9" width="2.2" height="2.2" fill="#bdbdbd"/><rect x="502.0" y="170.9" width="2.2" height="2.2" fill="#bdbdbd"/><rect x="496.0" y="177.2" width="2.2" height="2.2" fill="#bdbdbd"/><rect x="502.0" y="177.2" width="2.2" height="2.2" fill="#bdbdbd"/><rect x="496.0" y="183.5" width="2.2" height="2.2" fill="#bdbdbd"/><rect x="502.0" y="183.5" width="2.2" height="2.2" fill="#bdbdbd"/><path d="M535.4 180.7L553.3 149.5L544.7 144.5L526.7 175.7L535.4 180.7Z" fill="#e3e1dc" stroke="#c9c6bf" stroke-width="1.4"/><path d="M535.4 180.7L526.0 187.0L526.7 175.7Z" fill="#ecebe8" stroke="#cfcfcf" stroke-width="1.3"/><path d="M529.3 184.8L526.0 187.0L526.3 183.0Z" fill="#cfcfcf"/><path d="M531.5 178.4L549.4 147.2" stroke="#f3f2ef" stroke-width="2.5" opacity="0.6"/><path d="M551.3 153.0L553.3 149.5L544.7 144.5L542.7 148.0Z" fill="#f0efec" stroke="#c9c6bf" stroke-width="1.2"/><path d="M544.4 184.4L562.4 152.4L553.6 147.6L535.7 179.5L544.4 184.4Z" fill="#e3e1dc" stroke="#c9c6bf" stroke-width="1.4"/><path d="M544.4 184.4L535.0 191.0L535.7 179.5Z" fill="#ecebe8" stroke="#cfcfcf" stroke-width="1.3"/><path d="M538.3 188.7L535.0 191.0L535.2 187.0Z" fill="#cfcfcf"/><path d="M540.5 182.2L558.4 150.2" stroke="#f3f2ef" stroke-width="2.5" opacity="0.6"/><path d="M560.4 155.9L562.4 152.4L553.6 147.6L551.7 151.0Z" fill="#f0efec" stroke="#c9c6bf" stroke-width="1.2"/><path d="M560.5 186.0L572.5 186.0L566.5 193.0Z" fill="#555"/><path d="M604.8 183.6L627.8 148.5L620.2 143.5L597.2 178.6L604.8 183.6Z" fill="#f0d43a" stroke="#8a7a10" stroke-width="1.4"/><path d="M604.8 183.6L594.5 191.0L597.2 178.6Z" fill="#d8d8d8" stroke="#333" stroke-width="1.3"/><path d="M598.1 188.4L594.5 191.0L595.5 186.7Z" fill="#333"/><path d="M601.4 181.3L624.4 146.2" stroke="#fff8c0" stroke-width="2.2" opacity="0.6"/><path d="M625.6 151.8L627.8 148.5L620.2 143.5L618.0 146.9Z" fill="#f4f4f4" stroke="#8a7a10" stroke-width="1.2"/><rect x="654.5" y="146.5" width="39" height="39" rx="4" fill="#d9d9db" stroke="#cfcfcf" stroke-width="1.5"/><rect x="661" y="149" width="24" height="14" fill="#f0f0f0" stroke="#d0d0d0"/><rect x="663" y="172" width="21" height="13" fill="#ececec" stroke="#d3d3d3"/><path d="M687.6 187.5L702.4 164.1L695.6 159.9L680.8 183.3L687.6 187.5Z" fill="#e3e1dc" stroke="#c9c6bf" stroke-width="1.4"/><path d="M687.6 187.5L680.0 192.0L680.8 183.3Z" fill="#ecebe8" stroke="#cfcfcf" stroke-width="1.3"/><path d="M682.6 190.4L680.0 192.0L680.3 188.9Z" fill="#cfcfcf"/><path d="M684.5 185.6L699.3 162.2" stroke="#f3f2ef" stroke-width="2.0" opacity="0.6"/><path d="M700.2 167.5L702.4 164.1L695.6 159.9L693.5 163.2Z" fill="#f0efec" stroke="#c9c6bf" stroke-width="1.2"/><rect x="722" y="179" width="7" height="7" fill="#ddd" stroke="#cfcfcf" stroke-width="1.5"/><rect x="755" y="148" width="7" height="7" fill="#ddd" stroke="#cfcfcf" stroke-width="1.5"/><path d="M729 179L755 155" stroke="#d8d8d8" stroke-width="3" stroke-dasharray="5 4"/><path d="M778.5 164.0L793.5 164.0L786.0 172.0Z" fill="#555"/><path d="M812 160C810 150 820 146 830 148C838 150 842 149 848 150C856 152 855 163 848 166C842 168 838 172 832 170C822 168 815 168 812 160Z" fill="#e2e3e1" stroke="#cfcfcf" stroke-width="2"/><rect x="834.0" y="170.0" width="22.0" height="22.0" rx="4" fill="#cfcdc6"/><g stroke="#fff" stroke-width="2.4" stroke-linecap="round"><line x1="845.0" y1="181.0" x2="845.0" y2="188.9"/><line x1="845.0" y1="181.0" x2="838.1" y2="185.0"/><line x1="845.0" y1="181.0" x2="838.1" y2="177.0"/><line x1="845.0" y1="181.0" x2="845.0" y2="173.1"/><line x1="845.0" y1="181.0" x2="851.9" y2="177.0"/><line x1="845.0" y1="181.0" x2="851.9" y2="185.0"/></g><circle cx="845.0" cy="181.0" r="4.4" fill="#fff"/><circle cx="845.0" cy="181.0" r="1.8" fill="#cfcdc6"/><rect x="884" y="151" width="12" height="12" fill="none" stroke="#cfcfcf" stroke-width="2.2"/><path d="M884 151l12 12M896 151l-12 12M896 157h30M889 163L881 188" stroke="#cfcfcf" stroke-width="1.8"/><path d="M902 186L922 166M905 168L920 185" stroke="#dcdad4" stroke-width="5" stroke-linecap="round"/><path d="M935.0 164.0L947.0 164.0L941.0 172.0Z" fill="#555"/><rect x="968.5" y="148.5" width="39" height="9.5" fill="#e4e2dc" stroke="#d4d1c8" stroke-width="1.4"/><rect x="968.5" y="162" width="39" height="9.5" fill="#e4e2dc" stroke="#d4d1c8" stroke-width="1.4"/><rect x="968.5" y="176" width="39" height="9.5" fill="#e4e2dc" stroke="#d4d1c8" stroke-width="1.4"/><path d="M990.1 182.6L1010.4 149.1L1003.6 144.9L983.3 178.5L990.1 182.6Z" fill="#e3e1dc" stroke="#c9c6bf" stroke-width="1.4"/><path d="M990.1 182.6L981.0 190.0L983.3 178.5Z" fill="#ecebe8" stroke="#cfcfcf" stroke-width="1.3"/><path d="M984.2 187.4L981.0 190.0L981.8 186.0Z" fill="#cfcfcf"/><path d="M987.1 180.7L1007.3 147.2" stroke="#f3f2ef" stroke-width="2.0" opacity="0.6"/><path d="M1008.4 152.5L1010.4 149.1L1003.6 144.9L1001.5 148.4Z" fill="#f0efec" stroke="#c9c6bf" stroke-width="1.2"/><rect x="1034.5" y="148.5" width="27" height="27" fill="#e6e4de" stroke="#d4d1c8" stroke-width="1.4"/><rect x="1039" y="152" width="30" height="4" rx="2" fill="#d9c9c9"/><path d="M1040 160H1069L1067 188H1042Z" fill="#ece6e6" stroke="#d6c3c3" stroke-width="2"/><path d="M1050 162V186M1058 162V186" stroke="#d6c3c3" stroke-width="2"/><path d="M1098 165L1128 151M1102 153L1124 172" stroke="#cfcfcf" stroke-width="2"/><circle cx="1134" cy="160" r="5.5" fill="none" stroke="#cdbdbd" stroke-width="2.2"/><circle cx="1133" cy="181" r="5.5" fill="none" stroke="#cdbdbd" stroke-width="2.2"/><path d="M1179 148H1194L1202 156V180H1179Z" fill="#f3f3f3" stroke="#d8d8d8" stroke-width="1.6"/><path d="M1171 156H1186L1194 164V188H1171Z" fill="#fafafa" stroke="#c4c4c4" stroke-width="1.8"/><path d="M1175 168h10M1175 172h14M1175 176h10M1175 180h14M1175 184h14" stroke="#cfcfcf" stroke-width="1.4"/><rect x="1237" y="148.5" width="31" height="39" fill="#efeeea" stroke="#d2cfc8" stroke-width="1.6"/><rect x="1244" y="146.5" width="17" height="6" fill="#e9e9e9" stroke="#d2cfc8" stroke-width="1.3"/><path d="M1241 155H1256L1263 162V183H1241Z" fill="#fafafa" stroke="#c9c9c9" stroke-width="1.6"/><path d="M1245 167h13M1245 171h10M1245 175h13M1245 179h13" stroke="#d0d0d0" stroke-width="1.3"/><path d="M1301 165L1314 150V159C1328 158 1337 164 1337 174C1337 184 1329 188 1321 186C1328 184 1330 180 1329 176C1327 170 1321 170 1314 170V180Z" fill="#dcd4d0" stroke="#cdc6c2" stroke-width="1.3"/><path d="M1403 165L1390 150V159C1376 158 1367 164 1367 174C1367 184 1375 188 1383 186C1376 184 1374 180 1375 176C1377 170 1383 170 1390 170V180Z" fill="#d7dad8" stroke="#c8cdca" stroke-width="1.3"/><rect x="1434.0" y="152.0" width="2.2" height="2.2" fill="#bdbdbd"/><rect x="1440.0" y="152.0" width="2.2" height="2.2" fill="#bdbdbd"/><rect x="1434.0" y="158.3" width="2.2" height="2.2" fill="#bdbdbd"/><rect x="1440.0" y="158.3" width="2.2" height="2.2" fill="#bdbdbd"/><rect x="1434.0" y="164.6" width="2.2" height="2.2" fill="#bdbdbd"/><rect x="1440.0" y="164.6" width="2.2" height="2.2" fill="#bdbdbd"/><rect x="1434.0" y="170.9" width="2.2" height="2.2" fill="#bdbdbd"/><rect x="1440.0" y="170.9" width="2.2" height="2.2" fill="#bdbdbd"/><rect x="1434.0" y="177.2" width="2.2" height="2.2" fill="#bdbdbd"/><rect x="1440.0" y="177.2" width="2.2" height="2.2" fill="#bdbdbd"/><rect x="1434.0" y="183.5" width="2.2" height="2.2" fill="#bdbdbd"/><rect x="1440.0" y="183.5" width="2.2" height="2.2" fill="#bdbdbd"/><path d="M1459.0 163.0L1467.4 152.5H1499.5V173.5H1467.4Z" fill="#f9e46a" stroke="#c9a60e" stroke-width="2.2" stroke-linejoin="miter"/><text x="1468.5" y="168.9" font-family="Liberation Sans" font-weight="bold" font-size="17" fill="#333">abc</text><circle cx="1541" cy="162" r="13.5" fill="#0fa84a" stroke="#0b3b1c" stroke-width="1.6"/><path d="M1541 162V148.5A13.5 13.5 0 0 1 1552.7 155.2Z" fill="#f7d700" stroke="#0b3b1c" stroke-width="1.2"/><path d="M1541 162L1552.7 155.2A13.5 13.5 0 0 1 1541 175.5Z" fill="#c5150d" stroke="#0b3b1c" stroke-width="1.2"/><rect x="1544.5" y="176" width="5.5" height="13" fill="#fbd632" stroke="#f29a00" stroke-width="1.2"/><rect x="1552.5" y="164.5" width="5.5" height="24.5" fill="#11a84a" stroke="#0b3b1c" stroke-width="1.4"/><rect x="1560.5" y="178" width="7" height="11" fill="#b3150c" stroke="#3b0b0b" stroke-width="1.4"/><rect x="1588.0" y="149.0" width="2.5" height="37.5" fill="#d2d2d2"/><rect x="1590.5" y="149.0" width="1" height="37.5" fill="#fff"/><path d="M1605.0 163.0L1613.4 152.5H1635.5V173.5H1613.4Z" fill="#dcebfb" stroke="#5c9be6" stroke-width="2.2" stroke-linejoin="miter"/><text x="1614.5" y="168.9" font-family="Liberation Sans" font-weight="bold" font-size="17" fill="#333">ab</text><rect x="1637" y="161" width="5" height="14" rx="2.5" fill="#fff" stroke="#444" stroke-width="1.2"/><circle cx="1641.5" cy="179.5" r="9" fill="#9b2222"/><circle cx="1639" cy="176" r="2.5" fill="#d46a6a"/><path d="M1671.0 163.0L1679.4 152.5H1711.5V173.5H1679.4Z" fill="#fde6e6" stroke="#ee1c1c" stroke-width="2.2" stroke-linejoin="miter"/><text x="1680.5" y="168.9" font-family="Liberation Sans" font-weight="bold" font-size="17" fill="#e50d0d">abc</text><rect x="1733.0" y="149.0" width="2.5" height="37.5" fill="#d2d2d2"/><rect x="1735.5" y="149.0" width="1" height="37.5" fill="#fff"/><path d="M1751.0 163.0L1759.4 152.5H1781.5V173.5H1759.4Z" fill="#e6e5dd" stroke="#d4d2c6" stroke-width="2.2" stroke-linejoin="miter"/><text x="1760.5" y="168.9" font-family="Liberation Sans" font-weight="bold" font-size="17" fill="#b9b9b9">ab</text><rect x="1783" y="161" width="5" height="14" rx="2.5" fill="#fff" stroke="#bbb" stroke-width="1.2"/><circle cx="1787.5" cy="179.5" r="9" fill="#c9c4c4"/><path d="M1872.0 161.5l6 6l-6 6M1880.0 161.5l6 6l-6 6" fill="none" stroke="#333" stroke-width="2.6"/><rect x="1906.0" y="152.0" width="2.2" height="2.2" fill="#bdbdbd"/><rect x="1912.0" y="152.0" width="2.2" height="2.2" fill="#bdbdbd"/><rect x="1906.0" y="158.3" width="2.2" height="2.2" fill="#bdbdbd"/><rect x="1912.0" y="158.3" width="2.2" height="2.2" fill="#bdbdbd"/><rect x="1906.0" y="164.6" width="2.2" height="2.2" fill="#bdbdbd"/><rect x="1912.0" y="164.6" width="2.2" height="2.2" fill="#bdbdbd"/><rect x="1906.0" y="170.9" width="2.2" height="2.2" fill="#bdbdbd"/><rect x="1912.0" y="170.9" width="2.2" height="2.2" fill="#bdbdbd"/><rect x="1906.0" y="177.2" width="2.2" height="2.2" fill="#bdbdbd"/><rect x="1912.0" y="177.2" width="2.2" height="2.2" fill="#bdbdbd"/><rect x="1906.0" y="183.5" width="2.2" height="2.2" fill="#bdbdbd"/><rect x="1912.0" y="183.5" width="2.2" height="2.2" fill="#bdbdbd"/><circle cx="1954" cy="165" r="21.5" fill="#5d9ae0" stroke="#3a74c2" stroke-width="2"/><ellipse cx="1954" cy="165" rx="10" ry="21" fill="#dfe9f5" stroke="#3a74c2" stroke-width="1.2"/><path d="M1933 158h42M1933 172h42M1954 144v42" stroke="#3a74c2" stroke-width="1.2"/><path d="M1935 155a21 21 0 0 1 10 -9v38a21 21 0 0 1 -10 -10Z" fill="#555" opacity="0.55"/><path d="M1973 155a21 21 0 0 0 -10 -9v38a21 21 0 0 0 10 -10Z" fill="#555" opacity="0.55"/><rect x="1960.0" y="174.5" width="19.0" height="19.0" rx="4" fill="#5b945b" stroke="#3f7440" stroke-width="1"/><path d="M1963.4 184.0h12.2M1969.5 177.9v12.2" stroke="#fff" stroke-width="3.6"/><path d="M1971.0 185.0L1981.0 185.0L1976.0 191.0Z" fill="#222"/><path d="M1996.0 161.5l6 6l-6 6M2004.0 161.5l6 6l-6 6" fill="none" stroke="#333" stroke-width="2.6"/><rect x="2030.0" y="152.0" width="2.2" height="2.2" fill="#bdbdbd"/><rect x="2036.0" y="152.0" width="2.2" height="2.2" fill="#bdbdbd"/><rect x="2030.0" y="158.3" width="2.2" height="2.2" fill="#bdbdbd"/><rect x="2036.0" y="158.3" width="2.2" height="2.2" fill="#bdbdbd"/><rect x="2030.0" y="164.6" width="2.2" height="2.2" fill="#bdbdbd"/><rect x="2036.0" y="164.6" width="2.2" height="2.2" fill="#bdbdbd"/><rect x="2030.0" y="170.9" width="2.2" height="2.2" fill="#bdbdbd"/><rect x="2036.0" y="170.9" width="2.2" height="2.2" fill="#bdbdbd"/><rect x="2030.0" y="177.2" width="2.2" height="2.2" fill="#bdbdbd"/><rect x="2036.0" y="177.2" width="2.2" height="2.2" fill="#bdbdbd"/><rect x="2030.0" y="183.5" width="2.2" height="2.2" fill="#bdbdbd"/><rect x="2036.0" y="183.5" width="2.2" height="2.2" fill="#bdbdbd"/><path d="M2078 147.5C2068 147.5 2068 152 2068 156V160H2079V162H2062C2057 162 2057.5 167 2057.5 172C2057.5 178 2060 181 2064 181H2068V175C2068 171 2071 169 2075 169H2085C2088 169 2089 167 2089 164V154C2089 150 2086 147.5 2078 147.5Z" fill="#3f77ab"/><circle cx="2072.5" cy="152" r="1.8" fill="#fff"/><path d="M2079 189C2089 189 2089 185 2089 181V177H2078V175H2095C2100 175 2099.5 170 2099.5 165C2099.5 159 2097 156 2093 156H2089V162C2089 166 2086 168 2082 168H2072C2069 168 2068 170 2068 173V183C2068 187 2071 189 2079 189Z" fill="#fdd23c"/><circle cx="2084.5" cy="185" r="1.8" fill="#fff"/><path d="M2088 178L2099 183L2088 188" fill="none" stroke="#444" stroke-width="2"/><path d="M2120.0 161.5l6 6l-6 6M2128.0 161.5l6 6l-6 6" fill="none" stroke="#333" stroke-width="2.6"/><rect x="2154.0" y="152.0" width="2.2" height="2.2" fill="#bdbdbd"/><rect x="2160.0" y="152.0" width="2.2" height="2.2" fill="#bdbdbd"/><rect x="2154.0" y="158.3" width="2.2" height="2.2" fill="#bdbdbd"/><rect x="2160.0" y="158.3" width="2.2" height="2.2" fill="#bdbdbd"/><rect x="2154.0" y="164.6" width="2.2" height="2.2" fill="#bdbdbd"/><rect x="2160.0" y="164.6" width="2.2" height="2.2" fill="#bdbdbd"/><rect x="2154.0" y="170.9" width="2.2" height="2.2" fill="#bdbdbd"/><rect x="2160.0" y="170.9" width="2.2" height="2.2" fill="#bdbdbd"/><rect x="2154.0" y="177.2" width="2.2" height="2.2" fill="#bdbdbd"/><rect x="2160.0" y="177.2" width="2.2" height="2.2" fill="#bdbdbd"/><rect x="2154.0" y="183.5" width="2.2" height="2.2" fill="#bdbdbd"/><rect x="2160.0" y="183.5" width="2.2" height="2.2" fill="#bdbdbd"/><rect x="2182" y="146" width="39.5" height="41.5" fill="#6c9bcb" stroke="#1c1c1c" stroke-width="1.8"/><rect x="2182" y="146" width="10" height="41.5" fill="#26374a" stroke="#1c1c1c" stroke-width="1.8"/><text x="2200" y="178" font-family="Liberation Serif" font-size="26" fill="#fff">?</text><rect x="2252.0" y="152.0" width="2.2" height="2.2" fill="#bdbdbd"/><rect x="2258.0" y="152.0" width="2.2" height="2.2" fill="#bdbdbd"/><rect x="2252.0" y="158.3" width="2.2" height="2.2" fill="#bdbdbd"/><rect x="2258.0" y="158.3" width="2.2" height="2.2" fill="#bdbdbd"/><rect x="2252.0" y="164.6" width="2.2" height="2.2" fill="#bdbdbd"/><rect x="2258.0" y="164.6" width="2.2" height="2.2" fill="#bdbdbd"/><rect x="2252.0" y="170.9" width="2.2" height="2.2" fill="#bdbdbd"/><rect x="2258.0" y="170.9" width="2.2" height="2.2" fill="#bdbdbd"/><rect x="2252.0" y="177.2" width="2.2" height="2.2" fill="#bdbdbd"/><rect x="2258.0" y="177.2" width="2.2" height="2.2" fill="#bdbdbd"/><rect x="2252.0" y="183.5" width="2.2" height="2.2" fill="#bdbdbd"/><rect x="2258.0" y="183.5" width="2.2" height="2.2" fill="#bdbdbd"/><rect x="2.5" y="229.5" width="2.2" height="2.2" fill="#bdbdbd"/><rect x="8.5" y="229.5" width="2.2" height="2.2" fill="#bdbdbd"/><rect x="2.5" y="235.8" width="2.2" height="2.2" fill="#bdbdbd"/><rect x="8.5" y="235.8" width="2.2" height="2.2" fill="#bdbdbd"/><rect x="2.5" y="242.1" width="2.2" height="2.2" fill="#bdbdbd"/><rect x="8.5" y="242.1" width="2.2" height="2.2" fill="#bdbdbd"/><rect x="2.5" y="248.4" width="2.2" height="2.2" fill="#bdbdbd"/><rect x="8.5" y="248.4" width="2.2" height="2.2" fill="#bdbdbd"/><rect x="2.5" y="254.7" width="2.2" height="2.2" fill="#bdbdbd"/><rect x="8.5" y="254.7" width="2.2" height="2.2" fill="#bdbdbd"/><rect x="2.5" y="261.0" width="2.2" height="2.2" fill="#bdbdbd"/><rect x="8.5" y="261.0" width="2.2" height="2.2" fill="#bdbdbd"/><defs><linearGradient id="gmg" x1="0" y1="0" x2="0" y2="1"><stop offset="0" stop-color="#6da24a"/><stop offset="1" stop-color="#9dd07a"/></linearGradient></defs><rect x="26" y="222" width="48" height="48" fill="url(#gmg)"/><circle cx="53" cy="242" r="13.5" fill="#8cc06f" stroke="#fff" stroke-width="3.6"/><path d="M43 252L32 264" stroke="#fff" stroke-width="5" stroke-linecap="round"/><path d="M92 222L105 224L117 222L131 224V270L118 268L105 270L92 268Z" fill="#fdd34a"/><path d="M92 222h7v30h-7Z" fill="#a12766"/><path d="M95 228l12 2l-9 5Z" fill="#5db54a"/><path d="M111 224c-3 10 6 18 2 28c-3 8-12 8-18 14" stroke="#2e6ad1" stroke-width="4" fill="none"/><path d="M120 256c4-6 10-8 11-2v14" stroke="#6d9be0" stroke-width="4" fill="none"/><rect x="100" y="244" width="4" height="8" fill="#2d7a78"/><path d="M112 255L137 229" stroke="#5a2c0e" stroke-width="8" stroke-linecap="round"/><path d="M112 255L135 231" stroke="#b05a25" stroke-width="4.5" stroke-linecap="round"/><path d="M108 259l4-4" stroke="#222" stroke-width="3"/><rect x="166.0" y="229.5" width="2.2" height="2.2" fill="#bdbdbd"/><rect x="172.0" y="229.5" width="2.2" height="2.2" fill="#bdbdbd"/><rect x="166.0" y="235.8" width="2.2" height="2.2" fill="#bdbdbd"/><rect x="172.0" y="235.8" width="2.2" height="2.2" fill="#bdbdbd"/><rect x="166.0" y="242.1" width="2.2" height="2.2" fill="#bdbdbd"/><rect x="172.0" y="242.1" width="2.2" height="2.2" fill="#bdbdbd"/><rect x="166.0" y="248.4" width="2.2" height="2.2" fill="#bdbdbd"/><rect x="172.0" y="248.4" width="2.2" height="2.2" fill="#bdbdbd"/><rect x="166.0" y="254.7" width="2.2" height="2.2" fill="#bdbdbd"/><rect x="172.0" y="254.7" width="2.2" height="2.2" fill="#bdbdbd"/><rect x="166.0" y="261.0" width="2.2" height="2.2" fill="#bdbdbd"/><rect x="172.0" y="261.0" width="2.2" height="2.2" fill="#bdbdbd"/><circle cx="214" cy="245.7" r="24" fill="#05506e"/><rect x="202" y="231" width="24" height="26" rx="4" fill="#fff"/><rect x="205" y="236" width="18" height="9" rx="1" fill="#05506e"/><rect x="209" y="232.5" width="10" height="2" fill="#05506e"/><circle cx="206.5" cy="251.5" r="2" fill="#05506e"/><circle cx="221.5" cy="251.5" r="2" fill="#05506e"/><rect x="203" y="256" width="4" height="5" fill="#fff"/><rect x="221" y="256" width="4" height="5" fill="#fff"/><rect x="264.0" y="229.5" width="2.2" height="2.2" fill="#bdbdbd"/><rect x="270.0" y="229.5" width="2.2" height="2.2" fill="#bdbdbd"/><rect x="264.0" y="235.8" width="2.2" height="2.2" fill="#bdbdbd"/><rect x="270.0" y="235.8" width="2.2" height="2.2" fill="#bdbdbd"/><rect x="264.0" y="242.1" width="2.2" height="2.2" fill="#bdbdbd"/><rect x="270.0" y="242.1" width="2.2" height="2.2" fill="#bdbdbd"/><rect x="264.0" y="248.4" width="2.2" height="2.2" fill="#bdbdbd"/><rect x="270.0" y="248.4" width="2.2" height="2.2" fill="#bdbdbd"/><rect x="264.0" y="254.7" width="2.2" height="2.2" fill="#bdbdbd"/><rect x="270.0" y="254.7" width="2.2" height="2.2" fill="#bdbdbd"/><rect x="264.0" y="261.0" width="2.2" height="2.2" fill="#bdbdbd"/><rect x="270.0" y="261.0" width="2.2" height="2.2" fill="#bdbdbd"/><path d="M290 227h10v10M317 227h8v10M302 236h20M304 256v7h20" fill="none" stroke="#9bb0e8" stroke-width="0.9"/><path d="M297 227h8v9" stroke="#f08a8a" stroke-width="0.9" fill="none"/><path d="M318 228v20h8" stroke="#7ed67e" stroke-width="0.9" fill="none"/><text x="289" y="254" font-family="Liberation Sans" font-weight="bold" font-size="19" fill="#3f4856" stroke="#3f4856" stroke-width="0.6" textLength="46" lengthAdjust="spacingAndGlyphs">GTFS</text><path d="M298 247h28" stroke="#f08a8a" stroke-width="0.9"/><rect x="362.0" y="229.5" width="2.2" height="2.2" fill="#bdbdbd"/><rect x="368.0" y="229.5" width="2.2" height="2.2" fill="#bdbdbd"/><rect x="362.0" y="235.8" width="2.2" height="2.2" fill="#bdbdbd"/><rect x="368.0" y="235.8" width="2.2" height="2.2" fill="#bdbdbd"/><rect x="362.0" y="242.1" width="2.2" height="2.2" fill="#bdbdbd"/><rect x="368.0" y="242.1" width="2.2" height="2.2" fill="#bdbdbd"/><rect x="362.0" y="248.4" width="2.2" height="2.2" fill="#bdbdbd"/><rect x="368.0" y="248.4" width="2.2" height="2.2" fill="#bdbdbd"/><rect x="362.0" y="254.7" width="2.2" height="2.2" fill="#bdbdbd"/><rect x="368.0" y="254.7" width="2.2" height="2.2" fill="#bdbdbd"/><rect x="362.0" y="261.0" width="2.2" height="2.2" fill="#bdbdbd"/><rect x="368.0" y="261.0" width="2.2" height="2.2" fill="#bdbdbd"/><rect x="388.5" y="224.5" width="43" height="43.5" fill="#e5e5e5" stroke="#333" stroke-width="2" stroke-dasharray="4.5 3"/><rect x="390.5" y="226.5" width="25.5" height="25.5" fill="#fde95e" stroke="#c7a400" stroke-width="1.8"/><g transform="translate(406.0 239.0) scale(1.050)"><path d="M0 0L0 26L6.5 20L11 30L16 28L11.5 18.5L20 18.5Z" fill="#fff" stroke="#111" stroke-width="2" stroke-linejoin="round"/></g><path d="M447.0 242.5L461.0 242.5L454.0 250.5Z" fill="#555"/><rect x="498" y="238" width="23.5" height="27" fill="#fde95e" stroke="#c7a400" stroke-width="1.8"/><rect x="482.5" y="228" width="29" height="27.5" fill="#dde5ec" stroke="#8d8d8d" stroke-width="2"/><rect x="486" y="231.5" width="22" height="7" fill="#fff" stroke="#8d8d8d" stroke-width="1.6"/><rect x="486" y="243" width="22" height="7" fill="#fff" stroke="#8d8d8d" stroke-width="1.6"/><path d="M537.0 242.5L551.0 242.5L544.0 250.5Z" fill="#555"/><rect x="571" y="226.5" width="27" height="27" fill="#fde95e" stroke="#c7a400" stroke-width="1.8"/><rect x="579" y="234" width="27" height="27" fill="#fde95e" stroke="#c7a400" stroke-width="1.8"/><rect x="592" y="248" width="21.5" height="21.5" rx="3" fill="#d9141a"/><circle cx="602.7" cy="258.7" r="7.5" fill="#f4bcbc" stroke="#fff" stroke-width="1.5"/><path d="M597 264L608 253" stroke="#fff" stroke-width="3"/><path d="M597.5 260a6 6 0 0 0 9 -6" stroke="#d9141a" stroke-width="2.5" fill="none"/><path d="M627.0 242.5L641.0 242.5L634.0 250.5Z" fill="#555"/><rect x="660.5" y="226.5" width="27" height="27" fill="#fde95e" stroke="#c7a400" stroke-width="1.8"/><path d="M695 268L688 254A7.5 7.5 0 1 1 702 254Z" fill="#6e8fa8"/><circle cx="695" cy="251" r="3" fill="#fff"/><rect x="1969.0" y="229.5" width="2.2" height="2.2" fill="#bdbdbd"/><rect x="1975.0" y="229.5" width="2.2" height="2.2" fill="#bdbdbd"/><rect x="1969.0" y="235.8" width="2.2" height="2.2" fill="#bdbdbd"/><rect x="1975.0" y="235.8" width="2.2" height="2.2" fill="#bdbdbd"/><rect x="1969.0" y="242.1" width="2.2" height="2.2" fill="#bdbdbd"/><rect x="1975.0" y="242.1" width="2.2" height="2.2" fill="#bdbdbd"/><rect x="1969.0" y="248.4" width="2.2" height="2.2" fill="#bdbdbd"/><rect x="1975.0" y="248.4" width="2.2" height="2.2" fill="#bdbdbd"/><rect x="1969.0" y="254.7" width="2.2" height="2.2" fill="#bdbdbd"/><rect x="1975.0" y="254.7" width="2.2" height="2.2" fill="#bdbdbd"/><rect x="1969.0" y="261.0" width="2.2" height="2.2" fill="#bdbdbd"/><rect x="1975.0" y="261.0" width="2.2" height="2.2" fill="#bdbdbd"/></svg>
<div class="b" style="left:0.0px;top:284.0px;width:551.0px;height:1048.0px;background:#ececec"></div>
<div class="t" style="left:1.0px;top:293.7px;font-size:22.80px;color:#1d1d1d;font-weight:normal;font-style:normal;">Browser</div>
<div class="b" style="left:484.0px;top:294.0px;width:22.0px;height:22.0px;border:2px solid #8a8a8a;border-radius:4px"></div>
<div class="b" style="left:512.0px;top:294.0px;width:22.0px;height:22.0px;border:2px solid #8a8a8a;border-radius:4px"></div>
<div class="b" style="left:0.0px;top:385.5px;width:537.0px;height:206.0px;background:#fff;border-top:2px solid #c6c6c6;border-right:1.5px solid #c6c6c6;border-bottom:1.5px solid #c6c6c6"></div>
<div class="b" style="left:508.0px;top:387.5px;width:28.0px;height:202.5px;background:linear-gradient(90deg,#f8f8f8,#f0f0f0);border-left:1px solid #d4d4d4"></div>
<div class="b" style="left:509.0px;top:466.5px;width:27.0px;height:96.0px;background:#e1e1e1;border-top:1.5px solid #d0d0d0;border-bottom:2px solid #c9c9c9"></div>
<div class="b" style="left:509.0px;top:413.0px;width:27.0px;height:1.5px;background:#cfcfcf"></div>
<svg class="ic" style="left:508px;top:388px" width="28" height="200"><path d="M7 16L14 9L21 16Z" fill="#555"/><path d="M7 183L21 183L14 190Z" fill="#555"/></svg>
<div class="b" style="left:0;top:388px;width:508px;height:202px;overflow:hidden">
<div class="t" style="left:76.0px;top:3.9px;font-size:27.30px;color:#1d1d1d;font-weight:normal;font-style:normal;">/Volumes</div>
<div class="t" style="left:76.0px;top:39.9px;font-size:27.30px;color:#1d1d1d;font-weight:normal;font-style:normal;">Favorites</div>
<div class="t" style="left:108.0px;top:75.9px;font-size:27.30px;color:#1d1d1d;font-weight:normal;font-style:normal;">/Users/vigna/Downloads</div>
<div class="t" style="left:76.0px;top:111.9px;font-size:27.30px;color:#1d1d1d;font-weight:normal;font-style:normal;">Spatial Bookmarks</div>
<div class="t" style="left:76.0px;top:147.9px;font-size:27.30px;color:#1d1d1d;font-weight:normal;font-style:normal;">Home</div>
<div class="t" style="left:76.0px;top:183.9px;font-size:27.30px;color:#1d1d1d;font-weight:normal;font-style:normal;">/ (Macintosh HD)</div>
<svg class="ic" style="left:0;top:0" width="508" height="202"><g transform="translate(0 -388)"><path d="M6 397.5L13.5 405.0L6 412.5Z" fill="#555"/><path d="M2.5 437.0L17.5 437.0L10 445.0Z" fill="#555"/><path d="M38 469.5L45.5 477.0L38 484.5Z" fill="#555"/><path d="M6 505.5L13.5 513.0L6 520.5Z" fill="#555"/><path d="M6 541.5L13.5 549.0L6 556.5Z" fill="#555"/><path d="M6 577.5L13.5 585.0L6 592.5Z" fill="#555"/><path d="M34.5 393.5H48.5L53.5 397.0H61.5V419.5H34.5Z" fill="#f0f0f0" stroke="#7e7e7e" stroke-width="1.8"/><path d="M48.0 425.0L52.2 435.7L63.7 436.4L54.8 443.7L57.7 454.8L48.0 448.7L38.3 454.8L41.2 443.7L32.3 436.4L43.8 435.7Z" fill="#fde94a" stroke="#d3ae00" stroke-width="2" stroke-linejoin="round"/><path d="M66.5 468.5H79.5L82 471H90V476H66.5Z" fill="#8e8e8e"/><path d="M66.5 474H79L83 478H93V491H66.5Z" fill="#f0f0f0" stroke="#7e7e7e" stroke-width="1.8"/><path d="M38 500H59V522H38Z" fill="#e9e9e9" stroke="#9a9a9a" stroke-width="1.6"/><path d="M35 500a3 2 0 0 1 6 0V521a3 2 0 0 1 -6 0Z" fill="#f5f5f5" stroke="#9a9a9a" stroke-width="1.6"/><path d="M47 498.5H54V511L50.5 514L47 511Z" fill="#6c9bcb" stroke="#3e5f85" stroke-width="1.2"/><path d="M34.5 537.5H48.5L53.5 541.0H61.5V563.5H34.5Z" fill="#f0f0f0" stroke="#7e7e7e" stroke-width="1.8"/><path d="M41 551L48 544.5L55 551M43 550V557H53V550" fill="none" stroke="#333" stroke-width="1.8"/><path d="M34.5 573.5H48.5L53.5 577.0H61.5V599.5H34.5Z" fill="#f0f0f0" stroke="#7e7e7e" stroke-width="1.8"/></g></svg>
</div>
<div class="b" style="left:250.0px;top:596.0px;width:40.0px;height:2.0px;background:repeating-linear-gradient(90deg,#b5b5b5 0 2px,transparent 2px 6px)"></div>
<div class="t" style="left:1.0px;top:612.7px;font-size:22.80px;color:#1d1d1d;font-weight:normal;font-style:normal;">Layers</div>
<div class="b" style="left:484.0px;top:612.0px;width:22.0px;height:22.0px;border:2px solid #8a8a8a;border-radius:4px"></div>
<div class="b" style="left:512.0px;top:612.0px;width:22.0px;height:22.0px;border:2px solid #8a8a8a;border-radius:4px"></div>
<div class="b" style="left:0.0px;top:703.5px;width:537.0px;height:640.0px;background:#fff;border-top:2px solid #c6c6c6;border-right:1.5px solid #c6c6c6"></div>
<div class="b" style="left:0.0px;top:705.5px;width:535.5px;height:36.0px;background:#dadada"></div>
<div class="b" style="left:494.0px;top:708.0px;width:32.0px;height:33.0px;background:#f7f7f7;border-radius:4px"></div>
<div class="b" style="left:40.0px;top:709.5px;width:28.0px;height:28.0px;background:#fff;border:1.5px solid #bdbdbd;border-radius:2px"></div>
<div class="b" style="left:80.0px;top:707.5px;width:31.0px;height:32.0px;background:#c23b3a"></div>
<div class="t" style="left:124.5px;top:710.7px;font-size:26.90px;color:#1d1d1d;font-weight:bold;font-style:normal;text-decoration:underline;text-decoration-thickness:2.5px;text-underline-offset:4px">Calculated</div>
<div class="b" style="left:40.0px;top:745.5px;width:28.0px;height:28.0px;background:#fff;border:1.5px solid #bdbdbd;border-radius:2px"></div>
<div class="b" style="left:80.0px;top:743.5px;width:31.0px;height:32.0px;background:#d19a94"></div>
<div class="t" style="left:124.5px;top:746.7px;font-size:26.90px;color:#1d1d1d;font-weight:bold;font-style:normal;">buffer</div>
<div class="b" style="left:40.0px;top:781.5px;width:28.0px;height:28.0px;background:#fff;border:1.5px solid #bdbdbd;border-radius:2px"></div>
<div class="b" style="left:80.0px;top:779.5px;width:31.0px;height:32.0px;background:#a6735a"></div>
<div class="t" style="left:124.5px;top:782.7px;font-size:26.90px;color:#1d1d1d;font-weight:bold;font-style:normal;">LandUse2020</div>
<div class="b" style="left:550.0px;top:284.0px;width:1.0px;height:1048.0px;background:#cfcfcf"></div>
<svg class="ic" style="left:0;top:0" width="551" height="900"><rect x="11.5" y="341" width="21" height="21.5" fill="#f0f0f0" stroke="#8a8a8a" stroke-width="1.8"/><rect x="26.0" y="355.5" width="12.0" height="12.0" rx="4" fill="#5b945b" stroke="#3f7440" stroke-width="1"/><path d="M28.2 361.5h7.7M32.0 357.7v7.7" stroke="#fff" stroke-width="3.6"/><path d="M62.0 354.9A12.0 10.5 0 0 1 83.8 348.0" fill="none" stroke="#4a86cc" stroke-width="5.5"/><path d="M89.0 354.4L78.3 351.1L88.1 343.2Z" fill="#4a86cc" stroke="#3a74b8" stroke-width="1"/><path d="M86.0 353.1A12.0 10.5 0 0 1 64.2 360.0" fill="none" stroke="#4a86cc" stroke-width="5.5"/><path d="M59.0 353.6L69.7 356.9L59.9 364.8Z" fill="#4a86cc" stroke="#3a74b8" stroke-width="1"/><path d="M111.0 340.0H137.0L126.6 355.0V370.0L121.4 366.4V355.0Z" fill="#6c9bcb" stroke="#3e5f85" stroke-width="1.6" stroke-linejoin="round"/><rect x="111.0" y="340.0" width="26.0" height="5.1" fill="#fde94a" stroke="#3e5f85" stroke-width="1.5"/><path d="M162 344H188M163 344V366M163 350h5M163 362h5" stroke="#a6a6a6" stroke-width="1.6"/><rect x="167.5" y="347.5" width="4" height="5" fill="#fff" stroke="#ff9d16" stroke-width="1.8"/><rect x="167.5" y="359.5" width="4" height="5" fill="#fff" stroke="#ff9d16" stroke-width="1.8"/><path d="M180 339L170 349H176V366H184V349H190Z" fill="#6c9bcb" stroke="#3e5f85" stroke-width="1.5"/><circle cx="224" cy="354" r="12.5" fill="#6a98ca" stroke="#44699a" stroke-width="1.3"/><text x="218" y="364.5" font-family="Liberation Serif" font-style="italic" font-weight="bold" font-size="23" fill="#fff">i</text><rect x="484.5" y="294.0" width="21" height="21.5" rx="3" fill="none" stroke="#8f8f8f" stroke-width="1.6"/><rect x="491" y="298.5" width="8.5" height="8" fill="none" stroke="#777" stroke-width="1.7"/><rect x="488" y="302.5" width="8.5" height="8" fill="#ececec" stroke="#777" stroke-width="1.7"/><rect x="512.5" y="294.0" width="21" height="21.5" rx="3" fill="none" stroke="#8f8f8f" stroke-width="1.6"/><path d="M517.5 299.2l11 11M528.5 299.2l-11 11" stroke="#707070" stroke-width="3.2"/><rect x="484.5" y="612.0" width="21" height="21.5" rx="3" fill="none" stroke="#8f8f8f" stroke-width="1.6"/><rect x="491" y="616.5" width="8.5" height="8" fill="none" stroke="#777" stroke-width="1.7"/><rect x="488" y="620.5" width="8.5" height="8" fill="#ececec" stroke="#777" stroke-width="1.7"/><rect x="512.5" y="612.0" width="21" height="21.5" rx="3" fill="none" stroke="#8f8f8f" stroke-width="1.6"/><path d="M517.5 617.2l11 11M528.5 617.2l-11 11" stroke="#707070" stroke-width="3.2"/><path d="M10 672L17 661L30 666L24 684Z" fill="#f8e440"/><path d="M10 672L24 684L16 682L12 676Z" fill="#e23a3a"/><path d="M15 665L28 669L24 677L12 672Z" fill="#5c93d6"/><path d="M18 672L28 666L33 676L24 683Z" fill="#d9b27a" stroke="#8b6a3a" stroke-width="1"/><path d="M28 670L38 661" stroke="#c98a2c" stroke-width="3.5" stroke-linecap="round"/><path d="M60.5 684V664.5H66M64 680.5V661H83.5V680.5H64" fill="none" stroke="#8a8a8a" stroke-width="1.8"/><path d="M74 672V659a3 3 0 0 1 6 0V674" fill="none" stroke="#3e5f85" stroke-width="1.8"/><rect x="76.0" y="676.0" width="12.0" height="12.0" rx="4" fill="#5b945b" stroke="#3f7440" stroke-width="1"/><path d="M78.2 682.0h7.7M82.0 678.2v7.7" stroke="#fff" stroke-width="3.6"/><path d="M110 673C117 660 133 660 139 673C133 683 117 684 110 673Z" fill="#fff" stroke="#777" stroke-width="1.3"/><circle cx="124" cy="672" r="7.5" fill="#5b8fd0" stroke="#2f5d9a" stroke-width="1"/><circle cx="124" cy="671" r="2.8" fill="#111"/><path d="M132.0 682.5L144.0 682.5L138.0 688.5Z" fill="#555"/><path d="M161.0 657.0H187.0L176.6 672.0V687.0L171.4 683.4V672.0Z" fill="#6c9bcb" stroke="#3e5f85" stroke-width="1.6" stroke-linejoin="round"/><rect x="161.0" y="657.0" width="26.0" height="5.1" fill="#fde94a" stroke="#3e5f85" stroke-width="1.5"/><path d="M182.0 682.5L194.0 682.5L188.0 688.5Z" fill="#555"/><path d="M227 661c-3-2-9-2-11 1c-2 3 0 6 4 6c-5 0-7 3-6 6c1 4 8 5 12 1" fill="none" stroke="#5c2b7a" stroke-width="2.6"/><path d="M225 688V677a3 3 0 0 1 3 -3h8a3 3 0 0 1 3 3V688" fill="#9a9a9a" stroke="#7a7a7a" stroke-width="1"/><path d="M230 688V680h4v8" fill="#eee"/><path d="M252.5 668.5L267.5 668.5L260.0 676.5Z" fill="#555"/><path d="M284.0 660.5H312.0M286.0 660.5V684M286.0 668h5M286.0 680h5" stroke="#a6a6a6" stroke-width="1.6"/><rect x="294.0" y="665" width="4.5" height="5" fill="#fff" stroke="#ff9d16" stroke-width="1.8"/><rect x="294.0" y="677" width="4.5" height="5" fill="#fff" stroke="#ff9d16" stroke-width="1.8"/><path d="M304.0 685L293.5 674H300.0V658H308.0V674H314.5Z" fill="#6c9bcb" stroke="#3e5f85" stroke-width="1.5"/><path d="M334.0 660.5H362.0M336.0 660.5V684M336.0 668h5M336.0 680h5" stroke="#a6a6a6" stroke-width="1.6"/><rect x="344.0" y="665" width="4.5" height="5" fill="#fff" stroke="#ff9d16" stroke-width="1.8"/><rect x="344.0" y="677" width="4.5" height="5" fill="#fff" stroke="#ff9d16" stroke-width="1.8"/><path d="M354.0 657L343.5 668H350.0V684H358.0V668H364.5Z" fill="#6c9bcb" stroke="#3e5f85" stroke-width="1.5"/><rect x="385" y="658.5" width="22.5" height="23" fill="#f0f0f0" stroke="#8a8a8a" stroke-width="1.8"/><rect x="400" y="676" width="12" height="10" rx="2.5" fill="#e8414a"/><path d="M403 681h6" stroke="#fff" stroke-width="2"/><path d="M46 721.5L51.5 730.5L61 714.5" fill="none" stroke="#111" stroke-width="3"/><path d="M46 757.5L51.5 766.5L61 750.5" fill="none" stroke="#111" stroke-width="3"/><path d="M46 793.5L51.5 802.5L61 786.5" fill="none" stroke="#111" stroke-width="3"/><rect x="499" y="719" width="21.5" height="11" rx="3" fill="#fff" stroke="#777" stroke-width="1.8"/><path d="M503 715v4M508 715v4M513 715v4M517 715v4M503 730v4M508 730v4M513 730v4M517 730v4" stroke="#777" stroke-width="1.6"/></svg>
<div class="b" style="left:551px;top:286px;width:1723px;height:490px;background:#fff;overflow:hidden">
<svg width="1725" height="490" viewBox="551 286 1725 490" style="position:absolute;left:0;top:0">
<g fill="#a6735a" stroke="#232323" stroke-width="1.9" stroke-linejoin="miter">
<polygon points="552,288 627.6,288 634,470.5 555,472.7"/>
<polygon points="649.8,288 728.9,288 735.2,466.3 656.4,469"/>
<polygon points="751.2,288 830,288 836,462.9 757.5,465.6"/>
<polygon points="852.3,288 935.7,288 941.5,458.5 858.4,462.1"/>
<polygon points="958,288 1043.3,288 1048.6,455.5 963.7,457.6"/>
<polygon points="1065.3,288 1094.6,288 1098,453.2 1071.2,455"/>
<polygon points="1119.5,288 1144.3,288 1150,450.6 1123.2,451.9"/>
<polygon points="1166.8,288 1245.7,288 1251.4,447.2 1172.4,450.3"/>
<polygon points="1268.2,288 1347.1,288 1352.8,443.7 1273.8,446.6"/>
<polygon points="1369.6,288 1448.5,288 1455,440.5 1375.2,443.2"/>
<polygon points="1471,288 1549.9,288 1555.1,436.6 1476,439.5"/>
<polygon points="1572.4,288 1651.3,288 1657,433 1578,436"/>
<polygon points="1673.8,288 1752.5,288 1757.1,418.2 1679,429.6"/>
<polygon points="1775,288 1853.5,288 1857.5,404.6 1779.4,415.5"/>
<polygon points="1876,288 1955.2,288 1959.2,390.2 1880.3,401.4"/>
<polygon points="1977.8,288 2056.6,288 2059.6,376.7 1981.5,387.5"/>
<polygon points="2079.2,288 2158,288 2160.5,362.6 2082.4,372.9"/>
<polygon points="2180.6,288 2259.4,288 2262,347 2183,358.5"/>
<polygon points="556.1,499 635.1,495.8 641.9,692.7 562.9,695.3"/>
<polygon points="657.5,495 736,492.4 743,689.3 664.3,691.9"/>
<polygon points="758.3,491.9 836.8,489.3 843,686 765.7,687.4"/>
<polygon points="859.7,488 941,485.5 950.6,681.4 869.5,684"/>
<polygon points="967,484 1049.3,481.4 1056.5,672 973,681.4"/>
<polygon points="1072.5,480.6 1099.4,479.2 1105.8,676.4 1081,677.7"/>
<polygon points="1124.2,478.2 1150.8,477.4 1157.9,674.3 1131.1,675"/>
<polygon points="1173.7,476.1 1252.2,473.5 1259.3,670.6 1180.3,673.2"/>
<polygon points="1275.1,472.2 1354.1,470.1 1360.7,667.2 1281.7,669.8"/>
<polygon points="1376.5,469 1454.8,466.4 1462.1,663.2 1383.1,665.8"/>
<polygon points="1477.4,465.6 1556.2,463 1563.5,660 1484,662.4"/>
<polygon points="1579.3,462 1657.8,460 1664.1,655.8 1585.9,658.5"/>
<polygon points="1679.5,459.7 1758.2,456.2 1765.3,651 1686.6,654.8"/>
<polygon points="1781.3,455.3 1860,452.6 1866.7,648.8 1788,651"/>
<polygon points="1882.5,451.5 1961.1,448.8 1967.9,644.8 1889.2,647.5"/>
<polygon points="1983.4,448 2062.1,445.3 2069.1,640.7 1990.4,643.4"/>
<polygon points="2085.1,444 2163.8,441.2 2170.6,637.4 2091.9,640.2"/>
<polygon points="2186.3,440.4 2266,437.5 2272.6,633.1 2193.1,636.1"/>
<polygon points="564.8,721.7 643,718.5 651,918.5 572.8,921.7"/>
<polygon points="665.6,717.7 743.8,714.6 751.8,914.6 673.6,917.7"/>
<polygon points="766.8,714.6 845.2,712 853.2,912 774.8,914.6"/>
<polygon points="868.4,710.3 946,708 954,908 876.4,910.3"/>
<polygon points="970,707 1050,704 1058,904 978,907"/>
<polygon points="1083,703.5 1108,702.4 1116,902.4 1091,903.5"/>
<polygon points="1132.4,700.9 1159.3,700.1 1167.3,900.1 1140.4,900.9"/>
<polygon points="1181.6,699.6 1260.1,696.7 1268.1,896.7 1189.6,899.6"/>
<polygon points="1283,695.6 1361.5,692.7 1369.5,892.7 1291,895.6"/>
<polygon points="1383.9,692.2 1462.9,689 1470.9,889 1391.9,892.2"/>
<polygon points="1485.3,688.2 1564.3,685.6 1572.3,885.6 1493.3,888.2"/>
<polygon points="1586.7,684.3 1664.9,682.2 1672.9,882.2 1594.7,884.3"/>
<polygon points="1687.3,680.3 1766,678 1774,878 1695.3,880.3"/>
<polygon points="1790.2,677.3 1867.5,674.6 1875.5,874.6 1798.2,877.3"/>
<polygon points="1890.6,673.2 1969.3,670.5 1977.3,870.5 1898.6,873.2"/>
<polygon points="1991.5,670 2070.2,667 2078.2,867 1999.5,870"/>
<polygon points="2092.7,665.7 2171.4,663.2 2179.4,863.2 2100.7,865.7"/>
<polygon points="2194.5,661.9 2273.1,659.7 2281.1,859.7 2202.5,861.9"/>
<polygon points="1915,424.4 1959.8,418.2 1959.8,423"/>
<polygon points="1982.3,415.5 2060.7,404.1 2060.7,419 1982.3,422.2"/>
<polygon points="2083.2,401.1 2162.4,390.2 2163.3,415.5 2083.8,418.2"/>
<polygon points="2185.8,386.4 2205,383 2205,414 2186,415.5"/>
</g>
<path fill="none" stroke="#232323" stroke-width="1.85" d="M560.4 290.4L560.8 310.4M568.8 290.1L569.2 310.1M577.2 289.8L577.7 309.8M585.6 289.5L586.1 309.5M594 289.2L594.5 309.2M602.4 288.9L603 308.9M610.8 288.6L611.4 308.6M619.2 288.3L619.9 308.3M552.3 310.7L628.3 308M580.4 433L581.3 472M589.1 432.7L590.1 471.7M597.8 432.5L598.9 471.5M606.5 432.2L607.7 471.2M615.2 432L616.4 471M623.9 431.7L625.2 470.7M554.5 442L580.6 441.3M554.6 450.3L580.8 449.6M554.8 458.6L581 457.9M554.9 466.9L581.2 466.2M554.4 433.7L632.6 431.5M588.6 309.4L589.4 342.3M592.8 404.2L593.6 432.6M552.5 319L628.6 316.3M552.6 327.3L628.9 324.7M552.7 335.6L629.2 333M554 410.2L631.8 407.8M554.1 418.4L632.1 416.1M554.2 426.7L632.4 424.4M552.9 343.5L629.5 340.9M553.9 405.4L631.6 403M658.6 290.5L659 301.5M667.4 290.2L667.8 301.2M676.2 289.9L676.6 300.9M685 289.6L685.4 300.6M693.7 289.3L694.1 300.3M702.5 288.9L702.9 300M711.3 288.6L711.7 299.6M720.1 288.3L720.5 299.3M650.2 301.8L729.3 299M663.9 435.7L665.2 468.7M672.7 435.4L673.9 468.4M681.5 435.1L682.7 468.1M690.2 434.8L691.4 467.8M699 434.5L700.2 467.5M707.7 434.2L708.9 467.2M716.5 433.9L717.7 466.9M725.3 433.6L726.4 466.6M655.2 436L734 433.3M687.9 300.5L692.8 434.7M650.5 310.1L729.6 307.3M650.8 318.4L729.9 315.6M651.1 326.7L730.2 323.9M651.4 335L730.5 332.2M651.7 343.3L730.8 340.5M652.1 351.6L731 348.8M652.4 359.9L731.3 357.1M652.7 368.2L731.6 365.4M653 376.5L731.9 373.7M653.3 384.8L732.2 382M653.6 393.1L732.5 390.3M653.9 401.4L732.8 398.6M654.2 409.7L733.1 406.9M654.5 418L733.4 415.3M654.8 426.3L733.7 423.6M760 290.5L760.4 303.5M768.7 290.2L769.2 303.2M777.5 289.9L777.9 302.9M786.2 289.6L786.7 302.6M795 289.3L795.4 302.3M803.7 288.9L804.2 301.9M812.5 288.6L812.9 301.6M821.2 288.3L821.7 301.3M751.7 303.8L830.4 301M782.5 430.7L783.7 464.7M791.2 430.4L792.4 464.4M799.9 430.1L801.1 464.1M808.6 429.8L809.8 463.8M817.4 429.5L818.6 463.5M826.1 429.2L827.3 463.2M756.6 439.9L782.8 439M756.9 448.2L783 447.3M757.2 456.5L783.3 455.6M756.3 431.6L834.8 428.9M788 302.5L792.5 430.4M752 312.1L830.7 309.3M752.3 320.4L831 317.6M752.6 328.7L831.3 325.9M752.9 337L831.6 334.2M753.2 345.3L831.9 342.5M753.5 353.6L832.2 350.8M753.8 361.9L832.4 359.1M754.1 370.2L832.7 367.4M754.4 378.5L833 375.7M754.7 386.8L833.3 384M755 395.1L833.6 392.3M755.3 403.4L833.9 400.6M755.6 411.7L834.1 408.9M755.9 420L834.4 417.3M860.6 290.7L861 301.7M869 290.4L869.4 301.4M877.3 290.1L877.7 301.1M885.7 289.8L886 300.8M894 289.5L894.4 300.5M902.3 289.2L902.7 300.2M910.7 288.9L911.1 299.9M919 288.6L919.4 299.6M927.4 288.3L927.7 299.3M852.7 302L936.1 299M865.6 431.7L866.7 461.7M874 431.4L875 461.4M882.3 431L883.3 461M890.6 430.7L891.6 460.7M898.9 430.3L900 460.3M907.2 429.9L908.3 459.9M915.5 429.6L916.6 459.6M923.8 429.2L924.9 459.2M932.2 428.9L933.2 458.9M857.3 432.1L940.5 428.5M893.4 300.5L897.9 430.3M853 310.3L936.4 307.3M853.3 318.7L936.6 315.6M853.6 327L936.9 323.8M853.9 335.3L937.2 332.1M854.2 343.6L937.5 340.4M854.5 351.9L937.8 348.7M854.8 360.2L938 357M855.1 368.5L938.3 365.3M855.4 376.9L938.6 373.6M855.7 385.2L938.9 381.8M856 393.5L939.2 390.1M856.3 401.8L939.5 398.4M856.5 410.1L939.7 406.7M856.8 418.4L940 415M857.1 426.7L940.3 423.3M966.5 290.8L967 305.7M975.1 290.5L975.6 305.4M983.6 290.1L984.1 305.1M992.1 289.8L992.6 304.8M1000.6 289.5L1001.1 304.5M1009.2 289.2L1009.7 304.2M1017.7 288.9L1018.2 303.9M1026.2 288.6L1026.7 303.6M1034.8 288.3L1035.2 303.3M958.5 306L1043.8 303M979.6 424.2L980.7 457.2M988.1 424L989.2 457M996.6 423.8L997.7 456.8M1005.1 423.5L1006.1 456.6M1013.6 423.3L1014.6 456.3M1022.1 423.1L1023.1 456.1M1030.6 422.9L1031.6 455.9M1039.1 422.7L1040.1 455.7M962.9 432.9L979.8 432.5M963.1 441.2L980.1 440.8M963.4 449.5L980.4 449M962.6 424.6L1047.6 422.5M997.4 304.7L1001.3 423.6M958.8 314.3L1044 311.4M959.1 322.6L1044.3 319.7M959.4 330.9L1044.6 328M959.6 339.1L1044.8 336.3M959.9 347.4L1045.1 344.7M960.2 355.7L1045.4 353M960.5 364L1045.6 361.3M960.8 372.2L1045.9 369.6M961.1 380.5L1046.1 378M961.3 388.8L1046.4 386.3M961.6 397.1L1046.7 394.6M961.9 405.3L1046.9 402.9M962.2 413.6L1047.2 411.3M1180 417L1181.2 450M1188.8 416.6L1190 449.6M1197.6 416.3L1198.7 449.3M1206.3 415.9L1207.5 448.9M1215.1 415.6L1216.3 448.6M1223.9 415.2L1225.1 448.2M1232.7 414.9L1233.8 447.9M1241.4 414.5L1242.6 447.5M1171.2 417.3L1250.2 414.2M1203 289.5L1207.5 415.9M1167.1 299.1L1246 296.3M1167.4 307.5L1246.3 304.6M1167.7 315.8L1246.6 312.9M1168 324.1L1246.9 321.2M1168.3 332.4L1247.2 329.5M1168.6 340.7L1247.5 337.8M1168.8 349L1247.8 346.1M1169.1 357.3L1248.1 354.3M1169.4 365.6L1248.4 362.6M1169.7 373.9L1248.7 370.9M1170 382.2L1249 379.2M1170.3 390.5L1249.3 387.5M1170.6 398.8L1249.6 395.8M1170.9 407.1L1249.9 404.1M1298.9 412.6L1300.1 445.6M1307.7 412.3L1308.9 445.3M1316.5 412L1317.7 445M1325.3 411.7L1326.5 444.7M1334 411.3L1335.2 444.3M1342.8 411L1344 444M1272.9 421.9L1299.2 420.9M1273.2 430.2L1299.5 429.2M1273.5 438.5L1299.8 437.5M1272.6 413.6L1351.6 410.7M1306.5 289.5L1311 412.2M1268.5 299.1L1347.4 296.3M1268.8 307.4L1347.7 304.6M1269.1 315.7L1348 312.9M1269.4 324L1348.3 321.2M1269.7 332.3L1348.6 329.5M1270 340.6L1348.9 337.8M1270.3 349L1349.2 346.1M1270.6 357.3L1349.5 354.4M1270.9 365.6L1349.8 362.7M1271.2 373.9L1350.1 371M1271.5 382.2L1350.4 379.3M1271.8 390.5L1350.7 387.6M1272.1 398.8L1351 395.9M1272.4 407.1L1351.4 404.2M1382.8 409.9L1384.1 442.9M1391.7 409.6L1392.9 442.6M1400.5 409.3L1401.8 442.3M1409.4 409L1410.7 442M1418.2 408.7L1419.5 441.7M1427.1 408.4L1428.4 441.4M1435.9 408.1L1437.3 441.1M1444.7 407.8L1446.1 440.8M1374 410.2L1453.6 407.5M1409.7 289.4L1414.4 408.8M1369.9 299.1L1448.9 296.3M1370.2 307.4L1449.2 304.6M1370.5 315.7L1449.6 312.9M1370.8 324L1449.9 321.2M1371.1 332.3L1450.3 329.5M1371.4 340.6L1450.6 337.8M1371.7 348.9L1451 346.1M1372 357.2L1451.3 354.4M1372.3 365.5L1451.7 362.7M1372.6 373.8L1452 371M1373 382.1L1452.4 379.3M1373.3 390.4L1452.7 387.6M1373.6 398.7L1453.1 395.9M1373.9 407L1453.5 404.3M1483.7 406.2L1484.8 439.2M1492.5 405.9L1493.6 438.9M1501.2 405.5L1502.4 438.5M1510 405.2L1511.2 438.2M1518.8 404.9L1519.9 437.9M1527.6 404.6L1528.7 437.6M1536.4 404.2L1537.5 437.2M1545.2 403.9L1546.3 436.9M1474.9 406.5L1553.9 403.6M1509.5 289.5L1513.4 405.1M1471.3 299.1L1550.2 296.3M1471.6 307.4L1550.5 304.6M1471.8 315.7L1550.8 312.9M1472.1 324L1551.1 321.2M1472.4 332.3L1551.4 329.5M1472.7 340.7L1551.6 337.8M1473 349L1551.9 346.1M1473.2 357.3L1552.2 354.4M1473.5 365.6L1552.5 362.7M1473.8 373.9L1552.8 371M1474.1 382.2L1553.1 379.3M1474.4 390.5L1553.4 387.6M1474.6 398.8L1553.7 395.9M1585.5 402.7L1586.8 435.7M1594.3 402.3L1595.6 435.3M1603.1 402L1604.3 435M1611.8 401.7L1613.1 434.7M1620.6 401.3L1621.9 434.3M1629.4 401L1630.7 434M1638.2 400.7L1639.4 433.7M1646.9 400.3L1648.2 433.3M1576.7 403L1655.7 400M1608.2 289.6L1612.5 401.6M1572.7 299.1L1651.6 296.3M1573 307.4L1652 304.6M1573.4 315.8L1652.3 312.9M1573.7 324.1L1652.6 321.2M1574 332.4L1652.9 329.5M1574.3 340.7L1653.3 337.8M1574.6 349L1653.6 346.1M1575 357.3L1653.9 354.4M1575.3 365.6L1654.2 362.7M1575.6 373.9L1654.6 371M1575.9 382.2L1654.9 379.2M1576.2 390.5L1655.2 387.5M1576.6 398.8L1655.5 395.8M1686.3 392.3L1687.7 428.3M1695 391L1696.4 427.1M1703.7 389.8L1705 425.8M1712.4 388.5L1713.7 424.5M1721.1 387.2L1722.4 423.3M1729.8 386L1731.1 422M1738.5 384.7L1739.7 420.7M1747.1 383.5L1748.4 419.5M1677.7 393.6L1755.8 382.2M1713.4 289.4L1717 387.8M1674.1 299.4L1752.8 296M1674.4 308L1753.1 304.1M1674.8 316.5L1753.4 312.1M1675.1 325.1L1753.6 320.1M1675.4 333.7L1753.9 328.2M1675.7 342.2L1754.2 336.2M1676 350.8L1754.5 344.2M1676.4 359.3L1754.8 352.3M1676.7 367.9L1755.1 360.3M1677 376.5L1755.3 368.4M1677.3 385L1755.6 376.4M1795.6 380.1L1796.8 413.1M1804.3 378.8L1805.4 411.9M1813 377.6L1814.1 410.7M1821.6 376.4L1822.8 409.4M1830.3 375.2L1831.5 408.2M1839 374L1840.1 407M1847.7 372.8L1848.8 405.8M1778.5 390.8L1795.9 388.5M1778.8 399.1L1796.2 397M1779.1 407.4L1796.5 405.4M1778.2 382.5L1856.4 371.6M1814 289.4L1817 377M1775.3 299.4L1853.8 296M1775.6 308L1854.1 304M1775.9 316.6L1854.3 312.1M1776.2 325.1L1854.6 320.1M1776.5 333.7L1854.9 328.1M1776.8 342.3L1855.2 336.1M1777.1 350.9L1855.4 344.2M1777.4 359.4L1855.7 352.2M1777.7 368L1856 360.2M1778 376.6L1856.3 368.2M1887.8 368.1L1889.1 400.2M1896.6 366.9L1897.8 398.9M1905.4 365.6L1906.6 397.7M1914.1 364.4L1915.4 396.4M1922.9 363.1L1924.1 395.2M1931.6 361.9L1932.9 393.9M1940.4 360.7L1941.7 392.7M1949.2 359.4L1950.4 391.4M1879.1 369.4L1957.9 358.2M1913.7 289.5L1916.6 364M1876.3 299.5L1955.5 296M1876.7 308.1L1955.8 303.9M1877 316.7L1956.1 311.9M1877.3 325.4L1956.4 319.9M1877.7 334L1956.8 327.9M1878 342.6L1957.1 335.8M1878.3 351.2L1957.4 343.8M1878.7 359.9L1957.7 351.8M1997.6 351.1L1998.9 385.1M2006.3 349.8L2007.5 383.9M2015 348.6L2016.2 382.7M2023.7 347.4L2024.9 381.5M2032.4 346.2L2033.6 380.3M2041.1 345.1L2042.2 379.1M2049.8 343.9L2050.9 377.9M1980.5 361.8L1997.9 359.6M1980.8 370.1L1998.2 368.1M1981.2 378.4L1998.5 376.6M1980.2 353.5L2058.5 342.7M2015.7 289.5L2017.8 348.2M1978.1 299.5L2056.9 295.9M1978.5 308.1L2057.1 303.9M1978.8 316.8L2057.4 311.8M1979.1 325.5L2057.7 319.8M1979.5 334.1L2057.9 327.7M1979.8 342.8L2058.2 335.7M1980.1 351.4L2033.2 346.1M2089.7 334.7L2091.1 371.8M2098.4 333.6L2099.8 370.6M2107.1 332.4L2108.4 369.5M2115.8 331.2L2117.1 368.3M2124.5 330.1L2125.8 367.2M2133.2 329L2134.5 366M2141.9 327.8L2143.1 364.9M2150.6 326.7L2151.8 363.7M2081 335.9L2159.3 325.6M2117 289.5L2118.5 330.9M2079.5 299.5L2158.3 295.9M2079.9 308.2L2158.5 303.8M2080.2 316.9L2158.8 311.7M2080.6 325.6L2159.1 319.6M2199.1 315.8L2200.6 355.9M2207.8 314.5L2209.3 354.7M2216.5 313.2L2218.1 353.4M2225.3 311.9L2226.9 352.1M2234 310.7L2235.7 350.8M2242.8 309.4L2244.4 349.6M2251.5 308.2L2253.2 348.3M2181.9 326.8L2199.4 324.4M2182.2 335.1L2199.7 333M2182.5 343.4L2200 341.7M2182.8 351.7L2200.3 350.3M2181.6 318.5L2260.2 307M2218.2 289.5L2219.1 312.8M2180.9 299.7L2259.7 295.7M2181.2 308.6L2260.1 303.5M556.4 507.3L573.9 506.6M556.7 515.6L574.2 514.9M557 523.9L574.5 523.2M573.7 498.3L574.7 528.3M582.4 497.9L583.5 527.9M591.2 497.6L592.2 527.6M600 497.2L601 527.2M608.8 496.9L609.8 526.9M617.5 496.5L618.6 526.5M626.3 496.2L627.4 526.2M557.1 529L636.1 525.8M579.3 661.7L580.5 694.7M588.1 661.4L589.2 694.4M596.9 661.1L598 694.1M605.6 660.9L606.8 693.9M614.4 660.6L615.6 693.6M623.2 660.3L624.3 693.3M632 660L633.1 693M562 670.6L579.6 670M562.3 678.9L579.9 678.3M562.6 687.2L580.2 686.6M561.8 662.3L640.8 659.7M594.6 527.5L596 566.3M599.7 621.3L601.1 661M557.4 537.2L636.4 534.2M557.7 545.5L636.7 542.5M558 553.8L637 550.8M558.3 562.1L637.3 559.1M560.6 628.4L639.6 625.6M560.9 636.7L639.9 633.9M561.2 645L640.2 642.2M561.4 653.3L640.4 650.5M558.5 567.7L637.5 564.7M560.4 622.7L639.4 619.8M666.2 494.7L667.3 524.7M674.9 494.4L676 524.4M683.7 494.1L684.7 524.1M692.4 493.8L693.4 523.8M701.1 493.6L702.2 523.6M709.8 493.3L710.9 523.3M718.6 493L719.6 523M727.3 492.7L728.3 522.7M658.5 525L737.1 522.4M671.9 658.6L673 691.6M680.6 658.3L681.8 691.3M689.4 658L690.5 691M698.1 657.7L699.3 690.7M706.9 657.5L708 690.5M715.6 657.2L716.8 690.2M724.3 656.9L725.5 689.9M733.1 656.6L734.3 689.6M663.2 658.9L741.8 656.3M695.4 523.8L700 657.7M658.8 533.3L737.4 530.7M659.1 541.6L737.7 539M659.4 549.9L738 547.3M659.7 558.2L738.2 555.6M660 566.5L738.5 563.9M660.3 574.8L738.8 572.2M660.5 583.1L739.1 580.5M660.8 591.4L739.4 588.8M661.1 599.7L739.7 597.1M661.4 608L740 605.4M661.7 616.3L740.3 613.7M662 624.6L740.6 622M662.3 632.9L740.9 630.3M662.5 641.2L741.2 638.6M662.8 649.5L741.5 646.9M767 491.6L768.1 521.5M775.7 491.3L776.8 521.3M784.5 491L785.5 521M793.2 490.7L794.2 520.7M801.9 490.5L802.9 520.5M810.6 490.2L811.6 520.2M819.4 489.9L820.3 519.9M828.1 489.6L829 519.7M759.4 521.8L837.7 519.4M773.1 654.2L774.3 687.2M781.7 654.1L782.9 687.1M790.3 653.9L791.5 686.9M798.9 653.8L800.1 686.8M807.5 653.6L808.6 686.6M816.1 653.5L817.2 686.5M824.7 653.3L825.8 686.3M833.3 653.2L834.4 686.2M764.5 654.4L842 653M797.1 520.6L801.7 653.7M759.7 530.1L838 527.7M760.1 538.4L838.3 536M760.4 546.6L838.5 544.4M760.7 554.9L838.8 552.7M761 563.2L839.1 561M761.3 571.5L839.3 569.3M761.6 579.7L839.6 577.7M761.9 588L839.8 586M762.3 596.3L840.1 594.3M762.6 604.6L840.4 602.6M762.9 612.8L840.6 611M763.2 621.1L840.9 619.3M763.5 629.4L841.2 627.6M763.8 637.7L841.4 635.9M764.1 645.9L841.7 644.3M860.1 496.3L876.4 495.8M860.5 504.6L876.8 504.1M860.9 512.9L877.2 512.4M876 487.5L877.5 517.5M884.1 487.2L885.6 517.3M892.2 487L893.7 517M900.4 486.8L901.8 516.8M908.5 486.5L910 516.5M916.6 486.2L918.1 516.2M924.7 486L926.2 516M932.9 485.8L934.3 515.7M861.2 518L942.5 515.5M892.2 650.2L893.8 683.2M900.3 650L901.9 683M908.4 649.7L910 682.7M916.5 649.4L918.2 682.4M924.6 649.2L926.3 682.2M932.8 648.9L934.4 681.9M940.9 648.7L942.5 681.7M868.3 659.3L892.6 658.5M868.7 667.6L893 666.8M869.1 675.9L893.4 675.1M867.9 651L949 648.4M898.1 516.9L904.7 649.8M861.6 526.3L942.9 523.8M862 534.6L943.3 532.1M862.4 542.9L943.7 540.4M862.9 551.2L944.1 548.7M863.3 559.5L944.5 557M863.7 567.8L944.9 565.3M864.1 576.1L945.3 573.6M864.5 584.4L945.7 581.9M864.9 592.7L946.1 590.2M865.4 601L946.5 598.5M865.8 609.3L946.9 606.8M866.2 617.6L947.3 615.1M866.6 625.9L947.8 623.4M867 634.2L948.2 631.7M867.4 642.5L948.6 640M975.2 483.7L976.2 514.2M983.5 483.5L984.4 513.8M991.7 483.2L992.7 513.4M999.9 483L1000.9 513.1M1008.1 482.7L1009.2 512.7M1016.4 482.4L1017.4 512.3M1024.6 482.2L1025.7 512M1032.8 481.9L1033.9 511.6M1041.1 481.7L1042.2 511.2M967.9 514.5L1050.4 510.9M988.6 646.5L989.7 679.5M997 645.6L998 678.6M1005.3 644.6L1006.4 677.6M1013.6 643.7L1014.8 676.7M1022 642.8L1023.1 675.8M1030.3 641.8L1031.5 674.8M1038.6 640.9L1039.8 673.9M1046.9 639.9L1048.2 672.9M972.2 656.7L988.9 654.9M972.5 665L989.2 663.3M972.8 673.3L989.5 671.7M972 648.4L1055.3 639M1005.6 512.9L1010 644.1M968.2 523L1050.7 519M968.4 531.4L1051 527.2M968.7 539.9L1051.3 535.3M969 548.3L1051.6 543.5M969.2 556.8L1052 551.6M969.5 565.2L1052.3 559.8M969.7 573.6L1052.6 568M970 582.1L1052.9 576.1M970.2 590.5L1053.2 584.3M970.5 599L1053.5 592.4M970.8 607.4L1053.8 600.6M971 615.9L1054.1 608.7M971.3 624.3L1054.4 616.9M971.5 632.8L1054.7 625M971.8 641.2L1055 633.2M1182.4 475.8L1183.4 505.8M1191.1 475.5L1192.2 505.5M1199.9 475.2L1200.9 505.2M1208.6 474.9L1209.6 504.9M1217.3 474.7L1218.4 504.7M1226 474.4L1227.1 504.4M1234.8 474.1L1235.8 504.1M1243.5 473.8L1244.5 503.8M1174.7 506.1L1253.3 503.5M1188 639.9L1189.1 672.9M1196.7 639.6L1197.9 672.6M1205.5 639.3L1206.6 672.3M1214.3 639L1215.4 672M1223 638.8L1224.2 671.8M1231.8 638.5L1233 671.5M1240.6 638.2L1241.7 671.2M1249.3 637.9L1250.5 670.9M1179.2 640.2L1258.1 637.6M1211.9 504.9L1216.5 639M1175 514.4L1253.6 511.8M1175.3 522.7L1253.9 520.1M1175.5 531L1254.2 528.4M1175.8 539.3L1254.5 536.7M1176.1 547.6L1254.8 545M1176.4 555.9L1255.1 553.3M1176.7 564.2L1255.4 561.6M1176.9 572.5L1255.7 569.9M1177.2 580.8L1256 578.2M1177.5 589.1L1256.3 586.5M1177.8 597.4L1256.6 594.8M1178 605.7L1256.9 603.1M1178.3 614L1257.2 611.4M1178.6 622.3L1257.5 619.7M1178.9 630.6L1257.8 628M1283.9 472L1284.9 502M1292.7 471.7L1293.7 501.8M1301.4 471.5L1302.4 501.5M1310.2 471.3L1311.2 501.3M1319 471L1320 501M1327.8 470.8L1328.8 500.8M1336.5 470.6L1337.5 500.5M1345.3 470.3L1346.3 500.3M1276.1 502.2L1355.1 500.1M1289.4 636.5L1290.5 669.5M1298.2 636.2L1299.3 669.2M1306.9 635.9L1308 668.9M1315.7 635.6L1316.8 668.6M1324.5 635.4L1325.6 668.4M1333.3 635.1L1334.4 668.1M1342 634.8L1343.1 667.8M1350.8 634.5L1351.9 667.5M1280.6 636.8L1359.6 634.2M1315.7 501.1L1320.2 635.5M1276.4 510.5L1355.4 508.4M1276.7 518.9L1355.7 516.6M1276.9 527.2L1355.9 524.9M1277.2 535.5L1356.2 533.2M1277.5 543.8L1356.5 541.5M1277.8 552.1L1356.8 549.8M1278 560.4L1357 558.1M1278.3 568.7L1357.3 566.4M1278.6 577L1357.6 574.7M1278.9 585.3L1357.9 583M1279.2 593.7L1358.2 591.2M1279.4 602L1358.4 599.5M1279.7 610.3L1358.7 607.8M1280 618.6L1359 616.1M1280.3 626.9L1359.3 624.4M1376.8 477.3L1394.2 476.7M1377.1 485.6L1394.5 485M1377.3 493.9L1394.8 493.3M1393.9 468.4L1394.9 498.4M1402.6 468.1L1403.6 498.1M1411.3 467.8L1412.4 497.8M1420 467.6L1421.1 497.6M1428.7 467.3L1429.8 497.3M1437.4 467L1438.5 497M1446.1 466.7L1447.2 496.7M1377.5 499L1455.9 496.4M1408.3 631.9L1409.4 664.9M1417.1 631.6L1418.2 664.6M1425.8 631.4L1427 664.4M1434.6 631.1L1435.8 664.1M1443.3 630.8L1444.5 663.8M1452.1 630.5L1453.3 663.5M1382.3 641.1L1408.6 640.2M1382.5 649.4L1408.9 648.5M1382.8 657.7L1409.2 656.8M1382 632.8L1460.9 630.2M1413.8 497.8L1418.5 631.6M1377.8 507.3L1456.2 504.7M1378.1 515.6L1456.5 513M1378.3 523.9L1456.8 521.3M1378.6 532.2L1457.1 529.6M1378.9 540.5L1457.5 537.9M1379.2 548.8L1457.8 546.2M1379.5 557.1L1458.1 554.5M1379.7 565.4L1458.4 562.8M1380 573.7L1458.7 571.1M1380.3 582L1459 579.4M1380.6 590.3L1459.3 587.7M1380.8 598.6L1459.6 596M1381.1 606.9L1459.9 604.3M1381.4 615.2L1460.2 612.6M1381.7 623.5L1460.5 620.9M1486.2 465.3L1487.2 495.3M1494.9 465L1495.9 495M1503.7 464.7L1504.7 494.7M1512.4 464.4L1513.5 494.4M1521.2 464.2L1522.2 494.2M1529.9 463.9L1531 493.9M1538.7 463.6L1539.8 493.6M1547.4 463.3L1548.5 493.3M1478.4 495.6L1557.3 493M1509.4 628.6L1510.5 661.6M1518.2 628.3L1519.3 661.3M1527 628.1L1528.2 661.1M1535.8 627.8L1537 660.8M1544.6 627.5L1545.8 660.5M1553.5 627.3L1554.7 660.3M1483.2 637.7L1509.6 636.9M1483.5 646L1509.9 645.2M1483.7 654.3L1510.2 653.5M1482.9 629.4L1562.3 627M1515.7 494.4L1520.4 628.3M1478.7 503.9L1557.6 501.3M1479 512.2L1557.9 509.6M1479.2 520.5L1558.2 517.9M1479.5 528.8L1558.5 526.2M1479.8 537.1L1558.9 534.5M1480.1 545.4L1559.2 542.8M1480.4 553.7L1559.5 551.1M1480.6 562L1559.8 559.4M1480.9 570.2L1560.1 567.8M1481.2 578.5L1560.4 576.1M1481.5 586.8L1560.7 584.4M1481.7 595.1L1561 592.7M1482 603.4L1561.3 601M1482.3 611.7L1561.6 609.3M1482.6 620L1561.9 617.6M1588 461.8L1589 491.8M1596.7 461.6L1597.7 491.6M1605.5 461.3L1606.5 491.4M1614.2 461.1L1615.2 491.1M1622.9 460.9L1623.9 490.9M1631.6 460.7L1632.6 490.6M1640.4 460.4L1641.3 490.4M1649.1 460.2L1650 490.2M1580.3 492.1L1658.8 489.9M1593.5 625.2L1594.6 658.2M1602.2 624.9L1603.3 657.9M1610.9 624.6L1612 657.6M1619.6 624.3L1620.7 657.3M1628.3 624L1629.3 657M1637 623.7L1638 656.7M1645.7 623.4L1646.7 656.4M1654.3 623.1L1655.4 656.1M1584.8 625.5L1663 622.8M1617.6 491.1L1622 624.2M1580.6 500.4L1659 498.2M1580.9 508.7L1659.3 506.5M1581.1 517L1659.6 514.8M1581.4 525.3L1659.8 523.1M1581.7 533.6L1660.1 531.4M1582 541.9L1660.4 539.7M1582.3 550.3L1660.6 547.9M1582.5 558.6L1660.9 556.2M1582.8 566.9L1661.2 564.5M1583.1 575.2L1661.4 572.8M1583.4 583.5L1661.7 581.1M1583.7 591.8L1662 589.4M1583.9 600.1L1662.2 597.7M1584.2 608.5L1662.5 605.9M1584.5 616.8L1662.8 614.2M1679.8 468L1706 466.8M1680.1 476.3L1706.3 475.1M1680.4 484.6L1706.6 483.4M1705.7 458.5L1706.8 488.5M1714.5 458.1L1715.6 488.1M1723.2 457.8L1724.3 487.8M1732 457.4L1733.1 487.4M1740.7 457L1741.8 487M1749.5 456.6L1750.5 486.6M1680.6 489.7L1759.3 486.2M1702.9 621L1704.1 654M1711.6 620.5L1712.8 653.5M1720.4 620.1L1721.6 653.1M1729.1 619.7L1730.3 652.7M1737.9 619.3L1739.1 652.3M1746.6 618.8L1747.8 651.8M1755.4 618.4L1756.6 651.4M1685.7 630.1L1703.2 629.3M1686 638.4L1703.5 637.6M1686.3 646.7L1703.8 645.9M1685.4 621.8L1764.1 618M1719.7 488L1724.5 619.9M1680.9 498L1759.6 494.5M1681.2 506.3L1759.9 502.8M1681.5 514.6L1760.2 511.1M1681.8 522.9L1760.5 519.4M1682.1 531.3L1760.8 527.6M1682.4 539.6L1761.1 535.9M1682.7 547.9L1761.4 544.2M1683 556.2L1761.7 552.5M1683.3 564.5L1762 560.8M1683.6 572.8L1762.3 569.1M1683.9 581.1L1762.6 577.4M1684.2 589.4L1762.9 585.7M1684.5 597.7L1763.2 594M1684.8 606L1763.5 602.3M1685.1 614.3L1763.8 610.6M1790 455L1791.1 485M1798.8 454.7L1799.8 484.7M1807.5 454.4L1808.6 484.4M1816.3 454.1L1817.3 484.1M1825 453.8L1826 483.8M1833.8 453.5L1834.8 483.5M1842.5 453.2L1843.5 483.2M1851.3 452.9L1852.3 482.9M1782.3 485.3L1861 482.6M1804.4 617.5L1805.5 650.5M1813.1 617.3L1814.2 650.3M1821.8 617L1823 650M1830.6 616.8L1831.7 649.8M1839.3 616.5L1840.5 649.5M1848.1 616.3L1849.2 649.3M1856.8 616L1858 649M1787.2 626.3L1804.6 625.8M1787.4 634.6L1804.9 634.1M1787.7 642.9L1805.2 642.4M1786.9 618L1865.6 615.8M1818.2 484.1L1819.3 516.8M1823 573.5L1824.5 616.9M1782.6 493.6L1861.3 490.9M1782.9 501.8L1861.6 499.3M1783.2 510.1L1861.9 507.6M1785.4 576.4L1864.1 574.1M1785.7 584.7L1864.4 582.4M1786 593L1864.7 590.7M1786.3 601.3L1865 599M1786.6 609.6L1865.3 607.3M1783.4 517.9L1862.1 515.4M1785.4 574.7L1864.1 572.3M1891.2 451.2L1892.3 481.2M1900 450.9L1901 480.9M1908.7 450.6L1909.7 480.6M1917.4 450.3L1918.5 480.3M1926.2 450L1927.2 480M1934.9 449.7L1935.9 479.7M1943.6 449.4L1944.7 479.4M1952.4 449.1L1953.4 479.1M1883.5 481.5L1962.1 478.8M1914.3 613.6L1915.4 646.6M1923 613.3L1924.2 646.3M1931.8 613L1932.9 646M1940.5 612.7L1941.7 645.7M1949.3 612.4L1950.4 645.4M1958 612.1L1959.2 645.1M1888.4 622.8L1914.6 621.9M1888.6 631.1L1914.9 630.2M1888.9 639.4L1915.2 638.5M1888.1 614.5L1966.8 611.8M1919 480.3L1923.6 613.3M1883.8 489.8L1962.4 487.1M1884.1 498.1L1962.7 495.4M1884.4 506.4L1963 503.7M1884.7 514.7L1963.3 512M1884.9 523L1963.6 520.3M1885.2 531.3L1963.9 528.6M1885.5 539.6L1964.2 536.9M1885.8 547.9L1964.4 545.2M1886.1 556.2L1964.7 553.5M1886.4 564.5L1965 561.8M1886.6 572.8L1965.3 570.1M1886.9 581.1L1965.6 578.4M1887.2 589.4L1965.9 586.7M1887.5 597.7L1966.2 595M1887.8 606L1966.5 603.3M1983.7 456.3L2001.2 455.7M1984 464.6L2001.5 464M1984.3 472.9L2001.8 472.3M2000.9 447.4L2002 477.4M2009.6 447.1L2010.7 477.1M2018.4 446.8L2019.5 476.8M2027.1 446.5L2028.2 476.5M2035.9 446.2L2036.9 476.2M2044.6 445.9L2045.7 475.9M2053.4 445.6L2054.4 475.6M1984.5 478L2063.2 475.3M1998 610.1L1999.1 643.1M2006.7 609.8L2007.9 642.8M2015.5 609.5L2016.6 642.5M2024.2 609.2L2025.4 642.2M2032.9 608.9L2034.1 641.9M2041.7 608.6L2042.9 641.6M2050.4 608.3L2051.6 641.3M2059.2 608L2060.4 641M1989.2 610.4L2067.9 607.7M2023.5 476.7L2028.2 609.1M1984.8 486.3L2063.5 483.6M1985.1 494.6L2063.8 491.9M1985.4 502.9L2064.1 500.2M1985.7 511.2L2064.4 508.5M1986 519.5L2064.7 516.8M1986.3 527.8L2065 525.1M1986.6 536.1L2065.3 533.4M1986.9 544.4L2065.6 541.7M1987.2 552.7L2065.9 550M1987.4 561L2066.1 558.3M1987.7 569.3L2066.4 566.6M1988 577.6L2066.7 574.9M1988.3 585.9L2067 583.2M1988.6 594.2L2067.3 591.5M1988.9 602.5L2067.6 599.8M2093.8 443.7L2094.9 473.7M2102.6 443.4L2103.6 473.4M2111.3 443.1L2112.4 473.1M2120.1 442.8L2121.1 472.8M2128.8 442.4L2129.9 472.4M2137.6 442.1L2138.6 472.1M2146.3 441.8L2147.4 471.8M2155.1 441.5L2156.1 471.5M2086.1 474L2164.8 471.2M2099.5 606.9L2100.6 639.9M2108.2 606.6L2109.4 639.6M2117 606.3L2118.1 639.3M2125.7 606L2126.9 639M2134.5 605.6L2135.6 638.6M2143.2 605.3L2144.4 638.3M2152 605L2153.1 638M2160.7 604.7L2161.9 637.7M2090.8 607.2L2169.5 604.4M2122.7 472.7L2127.3 605.9M2086.4 482.3L2165.1 479.5M2086.7 490.6L2165.4 487.8M2087 498.9L2165.7 496.1M2087.3 507.2L2166 504.4M2087.6 515.5L2166.3 512.7M2087.9 523.8L2166.6 521M2088.2 532.1L2166.9 529.3M2088.4 540.4L2167.1 537.6M2088.7 548.7L2167.4 545.9M2089 557L2167.7 554.2M2089.3 565.3L2168 562.5M2089.6 573.6L2168.3 570.8M2089.9 581.9L2168.6 579.1M2090.2 590.2L2168.9 587.4M2090.5 598.5L2169.2 595.7M2195.2 440.1L2196.2 470.1M2204 439.8L2205 469.8M2212.9 439.4L2213.9 469.4M2221.7 439.1L2222.8 469.1M2230.6 438.8L2231.6 468.8M2239.4 438.5L2240.5 468.5M2248.3 438.1L2249.3 468.1M2257.1 437.8L2258.2 467.8M2187.3 470.4L2267 467.5M2218.5 602.1L2219.6 635.1M2227.3 601.8L2228.4 634.8M2236.1 601.4L2237.3 634.4M2245 601.1L2246.1 634.1M2253.8 600.8L2254.9 633.8M2262.6 600.4L2263.8 633.4M2192.2 611.4L2218.8 610.4M2192.5 619.7L2219 618.7M2192.8 628L2219.3 627M2192 603.1L2271.5 600.1M2223.2 469.1L2227.8 601.7M2187.6 478.7L2267.3 475.8M2187.9 487L2267.6 484.1M2188.2 495.3L2267.9 492.4M2188.5 503.6L2268.1 500.7M2188.8 511.9L2268.4 509M2189.1 520.2L2268.7 517.3M2189.4 528.5L2269 525.6M2189.7 536.8L2269.3 533.9M2189.9 545.1L2269.5 542.2M2190.2 553.4L2269.8 550.5M2190.5 561.7L2270.1 558.8M2190.8 570L2270.4 567.1M2191.1 578.3L2270.7 575.4M2191.4 586.6L2270.9 583.7M2191.7 594.9L2271.2 592M573.5 721.3L574.8 755.3M582.2 721L583.5 755M590.9 720.6L592.2 754.6M599.6 720.3L600.9 754.3M608.2 719.9L609.6 753.9M616.9 719.6L618.3 753.6M625.6 719.2L627 753.2M634.3 718.9L635.7 752.9M566.2 755.7L644.4 752.5M605.1 754.1L611.7 920.1M566.5 764L644.7 760.8M566.8 772.3L645 769.1M567.2 780.6L645.4 777.4M567.5 788.9L645.7 785.7M567.8 797.2L646 794M568.2 805.5L646.4 802.3M568.5 813.8L646.7 810.6M568.8 822.1L647 818.9M569.1 830.4L647.3 827.2M569.5 838.7L647.7 835.5M569.8 847L648 843.8M570.1 855.3L648.3 852.1M570.5 863.6L648.7 860.4M570.8 871.9L649 868.7M571.1 880.2L649.3 877M571.5 888.5L649.7 885.3M571.8 896.8L650 893.6M572.1 905.1L650.3 901.9M572.5 913.4L650.7 910.2M666.2 733.7L683.6 733M666.9 749.7L684.3 749M683 717L684.3 751M691.7 716.7L693 750.7M700.4 716.3L701.7 750.3M709 716L710.4 750M717.7 715.6L719.1 749.6M726.4 715.3L727.8 749.3M735.1 714.9L736.5 748.9M667 751.7L745.2 748.6M703 750.3L709.6 916.3M667.6 767.7L745.8 764.6M668.2 783.7L746.4 780.6M668.9 799.7L747.1 796.6M669.5 815.7L747.7 812.6M670.2 831.7L748.4 828.6M670.8 847.7L749 844.6M671.4 863.7L749.6 860.6M672.1 879.7L750.3 876.6M672.7 895.7L750.9 892.6M673.4 911.7L751.6 908.6M775.5 714.3L776.9 748.3M784.2 714L785.6 748M792.9 713.7L794.3 747.7M801.6 713.4L803 747.4M810.4 713.2L811.7 747.2M819.1 712.9L820.4 746.9M827.8 712.6L829.1 746.6M836.5 712.3L837.8 746.3M768.2 748.6L846.6 746M805.5 747.4L812.2 913.4M768.5 756.9L846.9 754.3M768.8 765.2L847.2 762.6M769.2 773.5L847.6 770.9M769.5 781.8L847.9 779.2M769.8 790.1L848.2 787.5M770.2 798.4L848.6 795.8M770.5 806.7L848.9 804.1M770.8 815L849.2 812.4M771.1 823.3L849.5 820.7M771.5 831.6L849.9 829M771.8 839.9L850.2 837.3M772.1 848.2L850.5 845.6M772.5 856.5L850.9 853.9M772.8 864.8L851.2 862.2M773.1 873.1L851.5 870.5M773.5 881.4L851.9 878.8M773.8 889.7L852.2 887.1M774.1 898L852.5 895.4M774.5 906.3L852.9 903.7M868.7 718.6L886 718.1M869.1 726.9L886.3 726.4M869.4 735.2L886.6 734.7M885.6 709.8L887 743.8M894.3 709.5L895.6 743.5M902.9 709.3L904.2 743.3M911.5 709L912.9 743M920.1 708.8L921.5 742.8M928.8 708.5L930.1 742.5M937.4 708.3L938.7 742.3M869.8 744.3L947.4 742M905.6 743.2L912.2 909.2M870.1 752.6L947.7 750.3M870.4 760.9L948 758.6M870.8 769.2L948.4 766.9M871.1 777.5L948.7 775.2M871.4 785.8L949 783.5M871.8 794.1L949.4 791.8M872.1 802.4L949.7 800.1M872.4 810.7L950 808.4M872.7 819L950.3 816.7M873.1 827.3L950.7 825M873.4 835.6L951 833.3M873.7 843.9L951.3 841.6M874.1 852.2L951.7 849.9M874.4 860.5L952 858.2M874.7 868.8L952.3 866.5M875.1 877.1L952.7 874.8M875.4 885.4L953 883.1M875.7 893.7L953.3 891.4M876.1 902L953.7 899.7M978 706.7L979.4 740.7M986 706.4L987.4 740.4M994 706.1L995.4 740.1M1002 705.8L1003.4 739.8M1010 705.5L1011.4 739.5M1018 705.2L1019.4 739.2M1026 704.9L1027.4 738.9M1034 704.6L1035.4 738.6M1042 704.3L1043.4 738.3M971.4 741L1051.4 738M1009.4 739.6L1016 905.6M971.7 749.3L1051.7 746.3M972 757.6L1052 754.6M972.4 765.9L1052.4 762.9M972.7 774.2L1052.7 771.2M973 782.5L1053 779.5M973.4 790.8L1053.4 787.8M973.7 799.1L1053.7 796.1M974 807.4L1054 804.4M974.3 815.7L1054.3 812.7M974.7 824L1054.7 821M975 832.3L1055 829.3M975.3 840.6L1055.3 837.6M975.7 848.9L1055.7 845.9M976 857.2L1056 854.2M976.3 865.5L1056.3 862.5M976.7 873.8L1056.7 870.8M977 882.1L1057 879.1M977.3 890.4L1057.3 887.4M977.7 898.7L1057.7 895.7M1182.2 715.6L1208.4 714.6M1182.9 731.6L1209 730.6M1207.8 698.6L1209.1 732.6M1216.5 698.3L1217.8 732.3M1225.2 698L1226.6 732M1233.9 697.7L1235.3 731.7M1242.7 697.3L1244 731.3M1251.4 697L1252.7 731M1183 733.6L1261.5 730.7M1220.1 732.2L1226.7 898.2M1183.6 749.6L1262.1 746.7M1184.2 765.6L1262.7 762.7M1184.9 781.6L1263.4 778.7M1185.5 797.6L1264 794.7M1186.2 813.6L1264.7 810.7M1186.8 829.6L1265.3 826.7M1187.4 845.6L1265.9 842.7M1188.1 861.6L1266.6 858.7M1188.7 877.6L1267.2 874.7M1189.4 893.6L1267.9 890.7M1291.7 695.3L1293.1 729.3M1300.4 695L1301.8 729M1309.2 694.6L1310.5 728.6M1317.9 694.3L1319.2 728.3M1326.6 694L1328 728M1335.3 693.7L1336.7 727.7M1344.1 693.3L1345.4 727.3M1352.8 693L1354.1 727M1284.4 729.6L1362.9 726.7M1321.7 728.2L1328.3 894.2M1285 745.6L1363.5 742.7M1285.6 761.6L1364.1 758.7M1286.3 777.6L1364.8 774.7M1286.9 793.6L1365.4 790.7M1287.6 809.6L1366.1 806.7M1288.2 825.6L1366.7 822.7M1288.8 841.6L1367.3 838.7M1289.5 857.6L1368 854.7M1290.1 873.6L1368.6 870.7M1290.8 889.6L1369.3 886.7M1384.2 700.5L1410.6 699.4M1384.6 708.8L1410.9 707.7M1384.9 717.1L1411.2 716M1410.2 691.1L1411.6 725.1M1419 690.8L1420.4 724.8M1427.8 690.4L1429.1 724.4M1436.6 690.1L1437.9 724.1M1445.3 689.7L1446.7 723.7M1454.1 689.4L1455.5 723.4M1385.3 726.2L1464.3 723M1421.8 724.7L1428.5 890.7M1385.6 734.5L1464.6 731.3M1385.9 742.8L1464.9 739.6M1386.3 751.1L1465.3 747.9M1386.6 759.4L1465.6 756.2M1386.9 767.7L1465.9 764.5M1387.3 776L1466.3 772.8M1387.6 784.3L1466.6 781.1M1387.9 792.6L1466.9 789.4M1388.2 800.9L1467.2 797.7M1388.6 809.2L1467.6 806M1388.9 817.5L1467.9 814.3M1389.2 825.8L1468.2 822.6M1389.6 834.1L1468.6 830.9M1389.9 842.4L1468.9 839.2M1390.2 850.7L1469.2 847.5M1390.6 859L1469.6 855.8M1390.9 867.3L1469.9 864.1M1391.2 875.6L1470.2 872.4M1391.6 883.9L1470.6 880.7M1494.1 687.9L1495.4 721.9M1502.9 687.6L1504.2 721.6M1511.6 687.3L1513 721.3M1520.4 687L1521.8 721M1529.2 686.8L1530.5 720.8M1538 686.5L1539.3 720.5M1546.7 686.2L1548.1 720.2M1555.5 685.9L1556.9 719.9M1486.7 722.2L1565.7 719.6M1526.3 720.9L1532.9 886.9M1487 730.5L1566 727.9M1487.3 738.8L1566.3 736.2M1487.7 747.1L1566.7 744.5M1488 755.4L1567 752.8M1488.3 763.7L1567.3 761.1M1488.7 772L1567.7 769.4M1489 780.3L1568 777.7M1489.3 788.6L1568.3 786M1489.6 796.9L1568.6 794.3M1490 805.2L1569 802.6M1490.3 813.5L1569.3 810.9M1490.6 821.8L1569.6 819.2M1491 830.1L1570 827.5M1491.3 838.4L1570.3 835.8M1491.6 846.7L1570.6 844.1M1492 855L1571 852.4M1492.3 863.3L1571.3 860.7M1492.6 871.6L1571.6 869M1493 879.9L1572 877.3M1587 692.6L1613.1 691.9M1587.4 700.9L1613.4 700.2M1587.7 709.2L1613.8 708.5M1612.8 683.6L1614.1 717.6M1621.5 683.4L1622.8 717.4M1630.1 683.1L1631.5 717.1M1638.8 682.9L1640.2 716.9M1647.5 682.7L1648.9 716.7M1656.2 682.4L1657.6 716.4M1588.1 718.3L1666.3 716.2M1627.8 717.2L1634.5 883.2M1588.4 726.6L1666.6 724.5M1588.7 734.9L1666.9 732.8M1589.1 743.2L1667.3 741.1M1589.4 751.5L1667.6 749.4M1589.7 759.8L1667.9 757.7M1590.1 768.1L1668.3 766M1590.4 776.4L1668.6 774.3M1590.7 784.7L1668.9 782.6M1591 793L1669.2 790.9M1591.4 801.3L1669.6 799.2M1591.7 809.6L1669.9 807.5M1592 817.9L1670.2 815.8M1592.4 826.2L1670.6 824.1M1592.7 834.5L1670.9 832.4M1593 842.8L1671.2 840.7M1593.4 851.1L1671.6 849M1593.7 859.4L1671.9 857.3M1594 867.7L1672.2 865.6M1594.4 876L1672.6 873.9M1696 680L1697.4 714M1704.8 679.8L1706.1 713.8M1713.5 679.5L1714.9 713.5M1722.3 679.3L1723.6 713.3M1731 679L1732.4 713M1739.8 678.8L1741.1 712.8M1748.5 678.5L1749.9 712.5M1757.3 678.3L1758.6 712.3M1688.7 714.3L1767.4 712M1728.8 713.1L1735.4 879.1M1689 722.6L1767.7 720.3M1689.3 730.9L1768 728.6M1689.7 739.2L1768.4 736.9M1690 747.5L1768.7 745.2M1690.3 755.8L1769 753.5M1690.7 764.1L1769.4 761.8M1691 772.4L1769.7 770.1M1691.3 780.7L1770 778.4M1691.6 789L1770.3 786.7M1692 797.3L1770.7 795M1692.3 805.6L1771 803.3M1692.6 813.9L1771.3 811.6M1693 822.2L1771.7 819.9M1693.3 830.5L1772 828.2M1693.6 838.8L1772.3 836.5M1694 847.1L1772.7 844.8M1694.3 855.4L1773 853.1M1694.6 863.7L1773.3 861.4M1695 872L1773.7 869.7M1790.8 693.3L1808 692.7M1791.5 709.3L1808.7 708.7M1807.4 676.7L1808.7 710.7M1816 676.4L1817.3 710.4M1824.6 676.1L1825.9 710.1M1833.1 675.8L1834.5 709.8M1841.7 675.5L1843.1 709.5M1850.3 675.2L1851.7 709.2M1858.9 674.9L1860.3 708.9M1791.6 711.3L1868.9 708.6M1826.4 710.1L1833.1 876.1M1792.2 727.3L1869.5 724.6M1792.8 743.3L1870.1 740.6M1793.5 759.3L1870.8 756.6M1794.1 775.3L1871.4 772.6M1794.8 791.3L1872.1 788.6M1795.4 807.3L1872.7 804.6M1796 823.3L1873.3 820.6M1796.7 839.3L1874 836.6M1797.3 855.3L1874.6 852.6M1798 871.3L1875.3 868.6M1899.3 672.9L1900.7 706.9M1908.1 672.6L1909.4 706.6M1916.8 672.3L1918.2 706.3M1925.6 672L1926.9 706M1934.3 671.7L1935.7 705.7M1943.1 671.4L1944.4 705.4M1951.8 671.1L1953.2 705.1M1960.6 670.8L1961.9 704.8M1892 707.2L1970.7 704.5M1929.2 705.9L1935.9 871.9M1892.6 723.2L1971.3 720.5M1893.2 739.2L1971.9 736.5M1893.9 755.2L1972.6 752.5M1894.5 771.2L1973.2 768.5M1895.2 787.2L1973.9 784.5M1895.8 803.2L1974.5 800.5M1896.4 819.2L1975.1 816.5M1897.1 835.2L1975.8 832.5M1897.7 851.2L1976.4 848.5M1898.4 867.2L1977.1 864.5M1991.8 678.3L2009.3 677.6M1992.2 686.6L2009.7 685.9M1992.5 694.9L2010 694.2M2009 669.3L2010.3 703.3M2017.7 669L2019.1 703M2026.5 668.7L2027.8 702.7M2035.2 668.3L2036.6 702.3M2044 668L2045.3 702M2052.7 667.7L2054.1 701.7M2061.5 667.3L2062.8 701.3M1992.9 704L2071.6 701M2032.3 702.5L2038.9 868.5M1993.2 712.3L2071.9 709.3M1993.5 720.6L2072.2 717.6M1993.9 728.9L2072.6 725.9M1994.2 737.2L2072.9 734.2M1994.5 745.5L2073.2 742.5M1994.9 753.8L2073.6 750.8M1995.2 762.1L2073.9 759.1M1995.5 770.4L2074.2 767.4M1995.8 778.7L2074.5 775.7M1996.2 787L2074.9 784M1996.5 795.3L2075.2 792.3M1996.8 803.6L2075.5 800.6M1997.2 811.9L2075.9 808.9M1997.5 820.2L2076.2 817.2M1997.8 828.5L2076.5 825.5M1998.2 836.8L2076.9 833.8M1998.5 845.1L2077.2 842.1M1998.8 853.4L2077.5 850.4M1999.2 861.7L2077.9 858.7M2101.4 665.4L2102.8 699.4M2110.2 665.1L2111.5 699.1M2118.9 664.9L2120.3 698.9M2127.7 664.6L2129 698.6M2136.4 664.3L2137.8 698.3M2145.2 664L2146.5 698M2153.9 663.8L2155.3 697.8M2162.7 663.5L2164 697.5M2094.1 699.7L2172.8 697.2M2129.7 698.6L2136.3 864.6M2094.4 708L2173.1 705.5M2094.7 716.3L2173.4 713.8M2095.1 724.6L2173.8 722.1M2095.4 732.9L2174.1 730.4M2095.7 741.2L2174.4 738.7M2096.1 749.5L2174.8 747M2096.4 757.8L2175.1 755.3M2096.7 766.1L2175.4 763.6M2097 774.4L2175.7 771.9M2097.4 782.7L2176.1 780.2M2097.7 791L2176.4 788.5M2098 799.3L2176.7 796.8M2098.4 807.6L2177.1 805.1M2098.7 815.9L2177.4 813.4M2099 824.2L2177.7 821.7M2099.4 832.5L2178.1 830M2099.7 840.8L2178.4 838.3M2100 849.1L2178.7 846.6M2100.4 857.4L2179.1 854.9M2194.8 670.2L2221 669.5M2195.2 678.5L2221.4 677.8M2195.5 686.8L2221.7 686.1M2220.7 661.2L2222.1 695.2M2229.4 660.9L2230.8 694.9M2238.2 660.7L2239.5 694.7M2246.9 660.4L2248.3 694.4M2255.6 660.2L2257 694.2M2264.4 659.9L2265.7 693.9M2195.9 695.9L2274.5 693.7M2231.9 694.9L2238.6 860.9M2196.2 704.2L2274.8 702M2196.5 712.5L2275.1 710.3M2196.9 720.8L2275.5 718.6M2197.2 729.1L2275.8 726.9M2197.5 737.4L2276.1 735.2M2197.9 745.7L2276.5 743.5M2198.2 754L2276.8 751.8M2198.5 762.3L2277.1 760.1M2198.8 770.6L2277.4 768.4M2199.2 778.9L2277.8 776.7M2199.5 787.2L2278.1 785M2199.8 795.5L2278.4 793.3M2200.2 803.8L2278.8 801.6M2200.5 812.1L2279.1 809.9M2200.8 820.4L2279.4 818.2M2201.2 828.7L2279.8 826.5M2201.5 837L2280.1 834.8M2201.8 845.3L2280.4 843.1M2202.2 853.6L2280.8 851.4M2021.5 409.8L2021.5 420.6M2107.0 397.8L2107.0 417.4M2130.0 394.7L2130.0 416.6M2145.0 392.6L2145.0 416.1M2155.0 391.2L2155.0 415.8M2186 394.5L2197 393.5M2186 402.5L2197 401.5"/>
<g fill="#c23b3a" stroke="#232323" stroke-width="2">
<polygon points="900.6,454.4 974.3,452 977.7,549 904.5,551.7"/>
<polygon points="771,638.2 874.2,634 877.4,715.6 773.6,719.8"/>
<polygon points="942.7,709.3 991.4,706.7 991.4,674.3 1088.8,670.3 1093,790 945,790"/>
<polygon points="1142.1,509.8 1285.1,505.9 1289.6,626.9 1146.9,632.4"/>
<polygon points="1441.7,368.2 1545.7,364.5 1547.7,437.4 1443.7,441.1"/>
<polygon points="1570.1,370.9 1668.2,368.2 1672,465.6 1573.3,469"/>
<polygon points="1557,735.1 1595.1,733.5 1595.1,692.2 1697.3,689.5 1699.5,790 1558,790"/>
<polygon points="2193.1,352.2 2266.3,342.2 2270.4,444 2197.2,446.7"/>
<polygon points="1712.9,647.5 1787.5,644.8 1790.8,734.3 1716.4,737"/>
<polygon points="2000.5,727.5 2104.4,724.3 2106,790 2001,790"/>
</g>
</svg>
</div>
<div class="b" style="left:2273.5px;top:284.0px;width:2.0px;height:492.0px;background:#e9e9e9;border-left:1px solid #cfcfcf"></div>
<div class="b" style="left:546.0px;top:774.0px;width:1733.0px;height:558.0px;border-radius:19px 19px 0 16px;background:#ebebeb;box-shadow:0 10px 100px 0px rgba(0,0,0,0.26),0 0 0 1px rgba(0,0,0,0.12)"></div>
<div class="b" style="left:546.0px;top:774.0px;width:1733.0px;height:56.0px;border-radius:19px 19px 0 0;background:#f1ecf3;border-bottom:2px solid #cdcbcf"></div>
<div class="b" style="left:561.8px;top:789.7px;width:24.4px;height:24.4px;border-radius:50%;background:#ff5f57;border:1px solid #e2463f"></div>
<div class="b" style="left:601.8px;top:789.7px;width:24.4px;height:24.4px;border-radius:50%;background:#febc2e;border:1px solid #e1a116"></div>
<div class="b" style="left:641.8px;top:789.7px;width:24.4px;height:24.4px;border-radius:50%;background:#28c840;border:1px solid #1aab29"></div>
<div class="t" style="left:815.5px;top:786.9px;width:1200px;text-align:center;font-size:27.30px;color:#3c3a3e;font-weight:bold;font-style:normal;">Calculated — Features Total: 1399, Filtered: 1399, Selected: 0</div>
<div class="b" style="left:546.0px;top:832.0px;width:1732.0px;height:60.0px;background:#ebebeb"></div>
<div class="b" style="left:546.0px;top:892.0px;width:1707.0px;height:35.0px;background:linear-gradient(#f6f6f6,#e6e6e6);border-top:1.5px solid #c4c4c4;border-bottom:2.5px solid #b3b3b3"></div>
<div class="b" style="left:699.5px;top:893.0px;width:1.5px;height:33.0px;background:#cacaca"></div>
<div class="b" style="left:899.5px;top:893.0px;width:1.5px;height:33.0px;background:#cacaca"></div>
<div class="b" style="left:1099.5px;top:893.0px;width:1.5px;height:33.0px;background:#cacaca"></div>
<div class="b" style="left:1299.5px;top:893.0px;width:1.5px;height:33.0px;background:#cacaca"></div>
<div class="b" style="left:1499.5px;top:893.0px;width:1.5px;height:33.0px;background:#cacaca"></div>
<div class="b" style="left:1699.5px;top:893.0px;width:1.5px;height:33.0px;background:#cacaca"></div>
<div class="b" style="left:1847.0px;top:893.0px;width:1.5px;height:33.0px;background:#cacaca"></div>
<div class="b" style="left:2047.0px;top:893.0px;width:1.5px;height:33.0px;background:#cacaca"></div>
<div class="b" style="left:2248.0px;top:893.0px;width:1.5px;height:33.0px;background:#cacaca"></div>
<div class="b" style="left:612.0px;top:927.0px;width:1641.0px;height:60.0px;background:#ffffff"></div>
<div class="b" style="left:546.0px;top:927.0px;width:66.0px;height:60.0px;background:linear-gradient(#f4f4f4,#e4e4e4);border-right:2.5px solid #b5b5b5;border-bottom:2.5px solid #b5b5b5"></div>
<div class="b" style="left:612.0px;top:985.5px;width:1641.0px;height:1.5px;background:#d4d4d4"></div>
<div class="b" style="left:612.0px;top:987.0px;width:1641.0px;height:60.0px;background:#f3f5f4"></div>
<div class="b" style="left:546.0px;top:987.0px;width:66.0px;height:60.0px;background:linear-gradient(#f4f4f4,#e4e4e4);border-right:2.5px solid #b5b5b5;border-bottom:2.5px solid #b5b5b5"></div>
<div class="b" style="left:612.0px;top:1045.5px;width:1641.0px;height:1.5px;background:#d4d4d4"></div>
<div class="b" style="left:612.0px;top:1047.0px;width:1641.0px;height:60.0px;background:#ffffff"></div>
<div class="b" style="left:546.0px;top:1047.0px;width:66.0px;height:60.0px;background:linear-gradient(#f4f4f4,#e4e4e4);border-right:2.5px solid #b5b5b5;border-bottom:2.5px solid #b5b5b5"></div>
<div class="b" style="left:612.0px;top:1105.5px;width:1641.0px;height:1.5px;background:#d4d4d4"></div>
<div class="b" style="left:612.0px;top:1107.0px;width:1641.0px;height:60.0px;background:#f3f5f4"></div>
<div class="b" style="left:546.0px;top:1107.0px;width:66.0px;height:60.0px;background:linear-gradient(#f4f4f4,#e4e4e4);border-right:2.5px solid #b5b5b5;border-bottom:2.5px solid #b5b5b5"></div>
<div class="b" style="left:612.0px;top:1165.5px;width:1641.0px;height:1.5px;background:#d4d4d4"></div>
<div class="b" style="left:612.0px;top:1167.0px;width:1641.0px;height:60.0px;background:#ffffff"></div>
<div class="b" style="left:546.0px;top:1167.0px;width:66.0px;height:60.0px;background:linear-gradient(#f4f4f4,#e4e4e4);border-right:2.5px solid #b5b5b5;border-bottom:2.5px solid #b5b5b5"></div>
<div class="b" style="left:612.0px;top:1225.5px;width:1641.0px;height:1.5px;background:#d4d4d4"></div>
<div class="b" style="left:612.0px;top:1227.0px;width:1641.0px;height:23.0px;background:#f3f5f4"></div>
<div class="b" style="left:546.0px;top:1227.0px;width:66.0px;height:23.0px;background:linear-gradient(#f4f4f4,#e4e4e4);border-right:2.5px solid #b5b5b5;border-bottom:2.5px solid #b5b5b5"></div>
<div class="b" style="left:699.5px;top:927.0px;width:1.5px;height:323.0px;background:#d2d2d2"></div>
<div class="b" style="left:899.5px;top:927.0px;width:1.5px;height:323.0px;background:#d2d2d2"></div>
<div class="b" style="left:1099.5px;top:927.0px;width:1.5px;height:323.0px;background:#d2d2d2"></div>
<div class="b" style="left:1299.5px;top:927.0px;width:1.5px;height:323.0px;background:#d2d2d2"></div>
<div class="b" style="left:1499.5px;top:927.0px;width:1.5px;height:323.0px;background:#d2d2d2"></div>
<div class="b" style="left:1699.5px;top:927.0px;width:1.5px;height:323.0px;background:#d2d2d2"></div>
<div class="b" style="left:1847.0px;top:927.0px;width:1.5px;height:323.0px;background:#d2d2d2"></div>
<div class="b" style="left:2047.0px;top:927.0px;width:1.5px;height:323.0px;background:#d2d2d2"></div>
<div class="b" style="left:2248.0px;top:927.0px;width:1.5px;height:323.0px;background:#d2d2d2"></div>
<div class="t" style="left:478.0px;top:898.9px;width:300px;text-align:center;font-size:23.80px;color:#111;font-weight:normal;font-style:normal;">pe</div>
<div class="t" style="left:650.5px;top:898.9px;width:300px;text-align:center;font-size:23.80px;color:#111;font-weight:normal;font-style:normal;">street</div>
<div class="t" style="left:850.5px;top:898.9px;width:300px;text-align:center;font-size:23.80px;color:#111;font-weight:normal;font-style:normal;">strucval</div>
<div class="t" style="left:1050.5px;top:898.9px;width:300px;text-align:center;font-size:23.80px;color:#111;font-weight:normal;font-style:normal;">to_st</div>
<div class="t" style="left:1250.5px;top:898.9px;width:300px;text-align:center;font-size:23.80px;color:#111;font-weight:normal;font-style:normal;">total_uses</div>
<div class="t" style="left:1450.5px;top:898.9px;width:300px;text-align:center;font-size:23.80px;color:#111;font-weight:normal;font-style:normal;">usetype</div>
<div class="t" style="left:1613.0px;top:898.9px;width:300px;text-align:center;font-size:23.80px;color:#111;font-weight:normal;font-style:normal;">visitor</div>
<div class="t" style="left:1798.0px;top:898.9px;width:300px;text-align:center;font-size:23.80px;color:#111;font-weight:normal;font-style:normal;">yrbuilt</div>
<div class="t" style="left:1998.5px;top:901.1px;width:300px;text-align:center;font-size:21.20px;color:#111;font-weight:normal;font-style:normal;">RESTRICTED</div>
<svg class="ic" style="left:1820px;top:900px" width="28" height="20"><path d="M4 15L13 5L22 15Z" fill="#555"/></svg>
<div class="t" style="left:552.5px;top:947.0px;font-size:22.50px;color:#1d1d1d;font-weight:normal;font-style:normal;">1</div>
<div class="t" style="left:708.5px;top:943.8px;font-size:25.60px;color:#1d1d1d;font-weight:normal;font-style:normal;">UNKNOWN</div>
<div class="t" style="left:903.0px;top:943.8px;width:190px;text-align:right;font-size:25.60px;color:#1d1d1d;font-weight:normal;font-style:normal;">0</div>
<div class="t" style="left:1109.0px;top:943.8px;font-size:25.60px;color:#7a7a7a;font-weight:normal;font-style:italic;">NULL</div>
<div class="t" style="left:1303.0px;top:943.8px;width:190px;text-align:right;font-size:25.60px;color:#1d1d1d;font-weight:normal;font-style:normal;">0</div>
<div class="t" style="left:1508.0px;top:943.8px;font-size:25.60px;color:#1d1d1d;font-weight:normal;font-style:normal;">P</div>
<div class="t" style="left:1711.0px;top:943.8px;width:130px;text-align:right;font-size:25.60px;color:#1d1d1d;font-weight:normal;font-style:normal;">0</div>
<div class="t" style="left:1852.3px;top:943.8px;width:190px;text-align:right;font-size:25.60px;color:#1d1d1d;font-weight:normal;font-style:normal;letter-spacing:1.3px">1900.00000...</div>
<div class="t" style="left:2056.0px;top:943.8px;font-size:25.60px;color:#1d1d1d;font-weight:normal;font-style:normal;">Yes</div>
<div class="t" style="left:552.5px;top:1007.0px;font-size:22.50px;color:#1d1d1d;font-weight:normal;font-style:normal;">2</div>
<div class="t" style="left:708.5px;top:1003.8px;font-size:25.60px;color:#1d1d1d;font-weight:normal;font-style:normal;">UNKNOWN</div>
<div class="t" style="left:903.0px;top:1003.8px;width:190px;text-align:right;font-size:25.60px;color:#1d1d1d;font-weight:normal;font-style:normal;">0</div>
<div class="t" style="left:1109.0px;top:1003.8px;font-size:25.60px;color:#7a7a7a;font-weight:normal;font-style:italic;">NULL</div>
<div class="t" style="left:1303.0px;top:1003.8px;width:190px;text-align:right;font-size:25.60px;color:#1d1d1d;font-weight:normal;font-style:normal;">0</div>
<div class="t" style="left:1508.0px;top:1003.8px;font-size:25.60px;color:#1d1d1d;font-weight:normal;font-style:normal;">P</div>
<div class="t" style="left:1711.0px;top:1003.8px;width:130px;text-align:right;font-size:25.60px;color:#1d1d1d;font-weight:normal;font-style:normal;">0</div>
<div class="t" style="left:1852.3px;top:1003.8px;width:190px;text-align:right;font-size:25.60px;color:#1d1d1d;font-weight:normal;font-style:normal;letter-spacing:1.3px">1900.00000...</div>
<div class="t" style="left:2056.0px;top:1003.8px;font-size:25.60px;color:#1d1d1d;font-weight:normal;font-style:normal;">Yes</div>
<div class="t" style="left:552.5px;top:1067.0px;font-size:22.50px;color:#1d1d1d;font-weight:normal;font-style:normal;">3</div>
<div class="t" style="left:708.5px;top:1063.8px;font-size:25.60px;color:#1d1d1d;font-weight:normal;font-style:normal;">STOCKTON</div>
<div class="t" style="left:903.0px;top:1063.8px;width:190px;text-align:right;font-size:25.60px;color:#1d1d1d;font-weight:normal;font-style:normal;">0</div>
<div class="t" style="left:1109.0px;top:1063.8px;font-size:25.60px;color:#7a7a7a;font-weight:normal;font-style:italic;">NULL</div>
<div class="t" style="left:1303.0px;top:1063.8px;width:190px;text-align:right;font-size:25.60px;color:#1d1d1d;font-weight:normal;font-style:normal;">0</div>
<div class="t" style="left:1508.0px;top:1063.8px;font-size:25.60px;color:#1d1d1d;font-weight:normal;font-style:normal;">E</div>
<div class="t" style="left:1711.0px;top:1063.8px;width:130px;text-align:right;font-size:25.60px;color:#1d1d1d;font-weight:normal;font-style:normal;">0</div>
<div class="t" style="left:1852.3px;top:1063.8px;width:190px;text-align:right;font-size:25.60px;color:#1d1d1d;font-weight:normal;font-style:normal;letter-spacing:1.3px">1900.00000...</div>
<div class="t" style="left:2056.0px;top:1063.8px;font-size:25.60px;color:#1d1d1d;font-weight:normal;font-style:normal;">Yes</div>
<div class="t" style="left:552.5px;top:1127.0px;font-size:22.50px;color:#1d1d1d;font-weight:normal;font-style:normal;">4</div>
<div class="t" style="left:708.5px;top:1123.8px;font-size:25.60px;color:#1d1d1d;font-weight:normal;font-style:normal;">FRANCISCO</div>
<div class="t" style="left:903.0px;top:1123.8px;width:190px;text-align:right;font-size:25.60px;color:#1d1d1d;font-weight:normal;font-style:normal;">0</div>
<div class="t" style="left:1109.0px;top:1123.8px;font-size:25.60px;color:#7a7a7a;font-weight:normal;font-style:italic;">NULL</div>
<div class="t" style="left:1303.0px;top:1123.8px;width:190px;text-align:right;font-size:25.60px;color:#1d1d1d;font-weight:normal;font-style:normal;">0</div>
<div class="t" style="left:1508.0px;top:1123.8px;font-size:25.60px;color:#1d1d1d;font-weight:normal;font-style:normal;">E</div>
<div class="t" style="left:1711.0px;top:1123.8px;width:130px;text-align:right;font-size:25.60px;color:#1d1d1d;font-weight:normal;font-style:normal;">0</div>
<div class="t" style="left:1852.3px;top:1123.8px;width:190px;text-align:right;font-size:25.60px;color:#1d1d1d;font-weight:normal;font-style:normal;letter-spacing:1.3px">1900.00000...</div>
<div class="t" style="left:2056.0px;top:1123.8px;font-size:25.60px;color:#1d1d1d;font-weight:normal;font-style:normal;">Yes</div>
<div class="t" style="left:552.5px;top:1187.0px;font-size:22.50px;color:#1d1d1d;font-weight:normal;font-style:normal;">5</div>
<div class="t" style="left:708.5px;top:1183.8px;font-size:25.60px;color:#1d1d1d;font-weight:normal;font-style:normal;">MASON</div>
<div class="t" style="left:904.3px;top:1183.8px;width:190px;text-align:right;font-size:25.60px;color:#1d1d1d;font-weight:normal;font-style:normal;letter-spacing:1.35px">1272892.000...</div>
<div class="t" style="left:1109.0px;top:1183.8px;font-size:25.60px;color:#7a7a7a;font-weight:normal;font-style:italic;">NULL</div>
<div class="t" style="left:1304.1px;top:1183.8px;width:190px;text-align:right;font-size:25.60px;color:#1d1d1d;font-weight:normal;font-style:normal;letter-spacing:1.1px">74012.00000...</div>
<div class="t" style="left:1508.0px;top:1183.8px;font-size:25.60px;color:#1d1d1d;font-weight:normal;font-style:normal;">O</div>
<div class="t" style="left:1711.0px;top:1183.8px;width:130px;text-align:right;font-size:25.60px;color:#1d1d1d;font-weight:normal;font-style:normal;">0</div>
<div class="t" style="left:1852.3px;top:1183.8px;width:190px;text-align:right;font-size:25.60px;color:#1d1d1d;font-weight:normal;font-style:normal;letter-spacing:1.3px">1968.00000...</div>
<div class="t" style="left:2056.0px;top:1183.8px;font-size:25.60px;color:#1d1d1d;font-weight:normal;font-style:normal;">Yes</div>
<div class="t" style="left:552.5px;top:1247.0px;font-size:22.50px;color:#1d1d1d;font-weight:normal;font-style:normal;"></div>
<div class="t" style="left:708.5px;top:1243.8px;font-size:25.60px;color:#1d1d1d;font-weight:normal;font-style:normal;">HYDE</div>
<div class="t" style="left:904.3px;top:1243.8px;width:190px;text-align:right;font-size:25.60px;color:#1d1d1d;font-weight:normal;font-style:normal;letter-spacing:1.35px">124553.000...</div>
<div class="t" style="left:1109.0px;top:1243.8px;font-size:25.60px;color:#7a7a7a;font-weight:normal;font-style:italic;">NULL</div>
<div class="t" style="left:1304.1px;top:1243.8px;width:190px;text-align:right;font-size:25.60px;color:#1d1d1d;font-weight:normal;font-style:normal;letter-spacing:1.1px">2500.00000...</div>
<div class="t" style="left:1508.0px;top:1243.8px;font-size:25.60px;color:#1d1d1d;font-weight:normal;font-style:normal;">Y</div>
<div class="t" style="left:1711.0px;top:1243.8px;width:130px;text-align:right;font-size:25.60px;color:#1d1d1d;font-weight:normal;font-style:normal;">0</div>
<div class="t" style="left:1852.3px;top:1243.8px;width:190px;text-align:right;font-size:25.60px;color:#1d1d1d;font-weight:normal;font-style:normal;letter-spacing:1.3px">1914.000000...</div>
<div class="t" style="left:2056.0px;top:1243.8px;font-size:25.60px;color:#1d1d1d;font-weight:normal;font-style:normal;">Yes</div>
<div class="b" style="left:2253.0px;top:892.0px;width:25.0px;height:358.0px;background:linear-gradient(90deg,#f7f7f7,#eeeeee);border-left:1px solid #d0d0d0"></div>
<div class="b" style="left:2254.0px;top:975.0px;width:24.0px;height:247.0px;background:#e0e0e0;border-top:2px solid #cacaca;border-bottom:2px solid #cacaca"></div>
<svg class="ic" style="left:2253px;top:893px" width="25" height="345"><path d="M5 18L12.5 10L20 18Z" fill="#555"/><path d="M5 338L20 338L12.5 346Z" fill="#555"/></svg>
<div class="b" style="left:2046.0px;top:894.5px;width:208.0px;height:356.0px;border:3.8px solid #fd2a1f"></div>
<div class="b" style="left:546.0px;top:1250.0px;width:1732.0px;height:28.5px;background:#e1e1e1;border-top:1.5px solid #c4c4c4;border-bottom:1.5px solid #c8c8c8"></div>
<div class="b" style="left:546.0px;top:1251.5px;width:28.0px;height:25.5px;background:linear-gradient(#fafafa,#ededed);border-right:1.5px solid #d0d0d0"></div>
<div class="b" style="left:1718.0px;top:1251.5px;width:504.0px;height:25.5px;background:linear-gradient(#ffffff,#ececec);border-left:1.5px solid #d0d0d0"></div>
<div class="b" style="left:2221.5px;top:1251.5px;width:29.0px;height:25.5px;background:linear-gradient(#fafafa,#ededed);border-left:1.5px solid #d0d0d0"></div>
<div class="b" style="left:2250.5px;top:1251.5px;width:27.5px;height:25.5px;background:#f4f4f4;border-left:1.5px solid #d0d0d0"></div>
<svg class="ic" style="left:546px;top:1251px" width="1732" height="27"><path d="M22 6L22 20L15 13Z" fill="#555"/><path d="M1685 6L1685 20L1692 13Z" fill="#555"/></svg>
<div class="b" style="left:546.0px;top:1278.5px;width:1732.0px;height:53.5px;background:#ebebeb;border-bottom-left-radius:16px"></div>
<div class="b" style="left:553.0px;top:1286.5px;width:238.0px;height:60.0px;border:1.5px solid #b9b9b9;border-radius:7px;background:linear-gradient(#fdfdfd,#f1f1f1)"></div>
<div class="t" style="left:594.5px;top:1299.2px;font-size:21.00px;color:#111;font-weight:normal;font-style:normal;">Show All Features</div>
<svg class="ic" style="left:770px;top:1312px" width="16" height="12"><path d="M2 4L13 4L7.5 10Z" fill="#444"/></svg>
<div class="b" style="left:2226.5px;top:1286.5px;width:47.0px;height:60.0px;border:1.5px solid #a9a9a9;border-radius:7px;background:#d9d9d9"></div>
<svg class="ic" style="left:0;top:0" width="2278" height="1332"><path d="M575.3 871.0L591.3 847.2L584.7 842.8L568.7 866.6L575.3 871.0Z" fill="#f0d43a" stroke="#8a7a10" stroke-width="1.4"/><path d="M575.3 871.0L567.5 875.5L568.7 866.6Z" fill="#d8d8d8" stroke="#333" stroke-width="1.3"/><path d="M570.2 873.9L567.5 875.5L567.9 872.4Z" fill="#333"/><path d="M572.3 869.0L588.3 845.2" stroke="#fff8c0" stroke-width="2.0" opacity="0.6"/><path d="M589.1 850.6L591.3 847.2L584.7 842.8L582.4 846.1Z" fill="#f4f4f4" stroke="#8a7a10" stroke-width="1.2"/><rect x="615.5" y="847" width="26" height="7" fill="#e4e2dc" stroke="#d4d1c8" stroke-width="1.2"/><rect x="615.5" y="857" width="26" height="7" fill="#e4e2dc" stroke="#d4d1c8" stroke-width="1.2"/><rect x="615.5" y="867" width="26" height="7" fill="#e4e2dc" stroke="#d4d1c8" stroke-width="1.2"/><path d="M630.2 871.0L645.0 846.8L639.0 843.2L624.2 867.4L630.2 871.0Z" fill="#e3e1dc" stroke="#c9c6bf" stroke-width="1.4"/><path d="M630.2 871.0L623.0 876.0L624.2 867.4Z" fill="#ecebe8" stroke="#cfcfcf" stroke-width="1.3"/><path d="M625.5 874.3L623.0 876.0L623.4 873.0Z" fill="#cfcfcf"/><path d="M627.5 869.4L642.3 845.2" stroke="#f3f2ef" stroke-width="1.8" opacity="0.6"/><path d="M642.9 850.2L645.0 846.8L639.0 843.2L636.9 846.6Z" fill="#f0efec" stroke="#c9c6bf" stroke-width="1.2"/><rect x="664" y="845.5" width="28" height="28" rx="3" fill="#d9d9db" stroke="#cfcfcf" stroke-width="1.3"/><rect x="668" y="848" width="18" height="9" fill="#f0f0f0" stroke="#d0d0d0"/><path d="M684.7 873.7L696.4 858.9L691.6 855.1L679.9 870.0L684.7 873.7Z" fill="#e3e1dc" stroke="#c9c6bf" stroke-width="1.4"/><path d="M684.7 873.7L679.0 876.0L679.9 870.0Z" fill="#ecebe8" stroke="#cfcfcf" stroke-width="1.3"/><path d="M681.0 875.2L679.0 876.0L679.3 873.9Z" fill="#cfcfcf"/><path d="M682.5 872.0L694.2 857.2" stroke="#f3f2ef" stroke-width="1.5" opacity="0.6"/><path d="M693.9 862.0L696.4 858.9L691.6 855.1L689.2 858.3Z" fill="#f0efec" stroke="#c9c6bf" stroke-width="1.2"/><rect x="710.0" y="849.0" width="2.5" height="21.5" fill="#d2d2d2"/><rect x="712.5" y="849.0" width="1" height="21.5" fill="#fff"/><rect x="729" y="847" width="25" height="28" fill="#f4f4f4" stroke="#d4dde6" stroke-width="1.3"/><rect x="727" y="853" width="28" height="5.5" fill="#e4e2dc" stroke="#d4d1c8"/><rect x="744.0" y="861.0" width="15.0" height="15.0" rx="4" fill="#d2d0c9"/><g stroke="#fff" stroke-width="2.4" stroke-linecap="round"><line x1="751.5" y1="868.5" x2="751.5" y2="873.9"/><line x1="751.5" y1="868.5" x2="746.8" y2="871.2"/><line x1="751.5" y1="868.5" x2="746.8" y2="865.8"/><line x1="751.5" y1="868.5" x2="751.5" y2="863.1"/><line x1="751.5" y1="868.5" x2="756.2" y2="865.8"/><line x1="751.5" y1="868.5" x2="756.2" y2="871.2"/></g><circle cx="751.5" cy="868.5" r="3.0" fill="#fff"/><circle cx="751.5" cy="868.5" r="1.2" fill="#d2d0c9"/><path d="M750.5 871.0L761.5 871.0L756.0 877.0Z" fill="#333"/><rect x="779" y="847" width="17" height="17" fill="#e6e4de" stroke="#d4d1c8" stroke-width="1.2"/><rect x="782" y="849" width="21" height="3" rx="1.5" fill="#d9c9c9"/><path d="M782 854H802L800 874H784Z" fill="#ece6e6" stroke="#d6c3c3" stroke-width="1.6"/><path d="M789 856V872M795 856V872" stroke="#d6c3c3" stroke-width="1.6"/><path d="M828 859L849 851M831 852L846 864" stroke="#cfcfcf" stroke-width="1.6"/><circle cx="853" cy="855" r="4" fill="none" stroke="#cdbdbd" stroke-width="1.8"/><circle cx="852" cy="869" r="4" fill="none" stroke="#cdbdbd" stroke-width="1.8"/><path d="M888 847H898L903 852V868H888Z" fill="#f3f3f3" stroke="#d8d8d8" stroke-width="1.3"/><path d="M882 853H892L897 858V874H882Z" fill="#fafafa" stroke="#c4c4c4" stroke-width="1.5"/><rect x="931.5" y="847" width="21" height="27" fill="#efeeea" stroke="#d2cfc8" stroke-width="1.4"/><rect x="936" y="845" width="12" height="5" fill="#e9e9e9" stroke="#d2cfc8"/><path d="M935 851H945L950 856V871H935Z" fill="#fafafa" stroke="#c9c9c9" stroke-width="1.4"/><rect x="974.0" y="849.0" width="2.5" height="21.5" fill="#d2d2d2"/><rect x="976.5" y="849.0" width="1" height="21.5" fill="#fff"/><rect x="1002" y="854.5" width="17.5" height="18" fill="#fde95e" stroke="#c7a400" stroke-width="1.5"/><path d="M1008 848c-3-2-9-2-11 1c-2 3 0 6 4 6c-5 0-7 3-6 6c1 4 8 5 12 1" fill="none" stroke="#5c2b7a" stroke-width="2.6"/><rect x="1043.5" y="847.5" width="25.5" height="7" fill="#fde95e" stroke="#c7a400" stroke-width="1.5"/><rect x="1043.5" y="856.5" width="25.5" height="7" fill="#fde95e" stroke="#c7a400" stroke-width="1.5"/><rect x="1043.5" y="865.5" width="25.5" height="7" fill="#fde95e" stroke="#c7a400" stroke-width="1.5"/><path d="M1093.5 847.5V872.5H1118.5Z" fill="#fde95e" stroke="#c7a400" stroke-width="1.5"/><path d="M1093.5 847.5H1118.5V872.5Z" fill="#efefef" stroke="#8a8a8a" stroke-width="1.5"/><rect x="1143.5" y="847.5" width="18" height="18" fill="#fde95e" stroke="#c7a400" stroke-width="1.5"/><rect x="1157" y="861" width="14.5" height="14.5" rx="2" fill="#d9141a"/><circle cx="1164.2" cy="868.2" r="4.8" fill="#f4bcbc" stroke="#fff" stroke-width="1.2"/><path d="M1160.5 872L1168 864.5" stroke="#fff" stroke-width="2"/><path d="M1193.5 845.5H1219.0L1208.8 860.5V875.5L1203.7 871.9V860.5Z" fill="#6c9bcb" stroke="#3e5f85" stroke-width="1.6" stroke-linejoin="round"/><rect x="1193.5" y="845.5" width="25.5" height="5.1" fill="#fde94a" stroke="#3e5f85" stroke-width="1.5"/><rect x="1243.5" y="847" width="26" height="26" fill="#dbe8f5" stroke="#6c98c8" stroke-width="1.6"/><rect x="1245" y="865" width="23" height="6" fill="#fde95e" stroke="#c7a400" stroke-width="1"/><path d="M1256.5 848L1250 855H1254V866H1259V855H1263Z" fill="#6c9bcb" stroke="#3e5f85" stroke-width="1.2"/><rect x="1296" y="851" width="18" height="18" fill="#fde95e" stroke="#c7a400" stroke-width="1.4"/><g transform="translate(1306 852)"><path d="M0 -7L-6 -1H-3V4H3V-1H6Z" fill="#6a97c8" stroke="#3d6390" stroke-width="1.1"/></g><g transform="translate(1306 869) rotate(180)"><path d="M0 -7L-6 -1H-3V4H3V-1H6Z" fill="#6a97c8" stroke="#3d6390" stroke-width="1.1"/></g><g transform="translate(1297.5 860.5) rotate(-90)"><path d="M0 -7L-6 -1H-3V4H3V-1H6Z" fill="#6a97c8" stroke="#3d6390" stroke-width="1.1"/></g><g transform="translate(1314.5 860.5) rotate(90)"><path d="M0 -7L-6 -1H-3V4H3V-1H6Z" fill="#6a97c8" stroke="#3d6390" stroke-width="1.1"/></g><rect x="1343" y="848" width="14" height="17" fill="#fde95e" stroke="#c7a400" stroke-width="1.3"/><line x1="1353.1" y1="864.2" x2="1341.0" y2="876.0" stroke="#444" stroke-width="8.5" stroke-linecap="butt"/><line x1="1349.5" y1="867.7" x2="1342.1" y2="875.0" stroke="#f2c53d" stroke-width="4.5"/><circle cx="1362.0" cy="855.5" r="10.5" fill="#eeeada" stroke="#555" stroke-width="2.8"/><path d="M1355.7 854.5a6.3 6.3 0 0 1 5.2 -5.2" fill="none" stroke="#fff" stroke-width="2.5" opacity="0.8"/><rect x="1388.5" y="849.0" width="2.5" height="21.5" fill="#d2d2d2"/><rect x="1391.0" y="849.0" width="1" height="21.5" fill="#fff"/><rect x="1408" y="847" width="25" height="26" fill="#f3f3f3" stroke="#d6dde4" stroke-width="1.2"/><rect x="1412" y="845" width="6" height="30" fill="#deddd6" stroke="#d0cec6"/><rect x="1422.0" y="861.0" width="14.0" height="14.0" rx="4" fill="#d2d0c9"/><g stroke="#fff" stroke-width="2.4" stroke-linecap="round"><line x1="1429.0" y1="868.0" x2="1429.0" y2="873.0"/><line x1="1429.0" y1="868.0" x2="1424.6" y2="870.5"/><line x1="1429.0" y1="868.0" x2="1424.6" y2="865.5"/><line x1="1429.0" y1="868.0" x2="1429.0" y2="863.0"/><line x1="1429.0" y1="868.0" x2="1433.4" y2="865.5"/><line x1="1429.0" y1="868.0" x2="1433.4" y2="870.5"/></g><circle cx="1429.0" cy="868.0" r="2.8" fill="#fff"/><circle cx="1429.0" cy="868.0" r="1.1" fill="#d2d0c9"/><rect x="1458" y="847" width="25" height="26" fill="#f3f3f3" stroke="#e0dcdc" stroke-width="1.2"/><rect x="1462" y="845" width="6" height="30" fill="#e2dcdc" stroke="#d6cfcf"/><rect x="1472" y="862" width="14" height="14" rx="2.5" fill="#e2dada"/><path d="M1475 865l8 8M1483 865l-8 8" stroke="#fff" stroke-width="2"/><rect x="1507.5" y="847" width="25.5" height="25.5" fill="#e9f0f8" stroke="#6c98c8" stroke-width="1.6"/><path d="M1511 851h6M1511 857h18M1511 862h18M1511 867h18" stroke="#6c98c8" stroke-width="1.6"/><path d="M1518.3 871.3L1533.9 847.9L1528.1 844.1L1512.5 867.5L1518.3 871.3Z" fill="#f07b1e" stroke="#9a4a0d" stroke-width="1.4"/><path d="M1518.3 871.3L1511.0 876.0L1512.5 867.5Z" fill="#d8d8d8" stroke="#333" stroke-width="1.3"/><path d="M1513.6 874.4L1511.0 876.0L1511.5 873.0Z" fill="#333"/><path d="M1515.7 869.6L1531.3 846.2" stroke="#fff8c0" stroke-width="1.8" opacity="0.6"/><path d="M1531.7 851.3L1533.9 847.9L1528.1 844.1L1525.9 847.4Z" fill="#f4f4f4" stroke="#9a4a0d" stroke-width="1.2"/><path d="M1558 848V873M1583 848V873" stroke="#555" stroke-width="1.6"/><rect x="1556.5" y="872" width="28" height="3" fill="#555"/><path d="M1558 850h25M1558 858h25M1558 866h25" stroke="#555" stroke-width="1.2"/><circle cx="1566.5" cy="850" r="3" fill="#f3b5b5" stroke="#b01e1e" stroke-width="1.3"/><circle cx="1577.0" cy="850" r="3" fill="#f3b5b5" stroke="#b01e1e" stroke-width="1.3"/><circle cx="1564.0" cy="858" r="3" fill="#c6efc0" stroke="#3c9a3c" stroke-width="1.3"/><circle cx="1570.5" cy="858" r="3" fill="#c6efc0" stroke="#3c9a3c" stroke-width="1.3"/><circle cx="1564.0" cy="866" r="3" fill="#cde3f7" stroke="#2f6ea8" stroke-width="1.3"/><circle cx="1570.5" cy="866" r="3" fill="#cde3f7" stroke="#2f6ea8" stroke-width="1.3"/><circle cx="1577.0" cy="866" r="3" fill="#cde3f7" stroke="#2f6ea8" stroke-width="1.3"/><rect x="1602.0" y="849.0" width="2.5" height="21.5" fill="#d2d2d2"/><rect x="1604.5" y="849.0" width="1" height="21.5" fill="#fff"/><rect x="1621.5" y="847.5" width="25" height="7" fill="#fff" stroke="#999" stroke-width="1.2"/><path d="M1630 851h13" stroke="#666" stroke-width="2"/><rect x="1621.5" y="856.5" width="25" height="7" fill="#c8ecc0" stroke="#4c9a4c" stroke-width="1.2"/><path d="M1630 860h13" stroke="#555" stroke-width="2"/><rect x="1621.5" y="865.5" width="25" height="7" fill="#fff" stroke="#999" stroke-width="1.2"/><path d="M1624 869h3" stroke="#a80000" stroke-width="2.5"/><path d="M1629 869h14" stroke="#f5a6a6" stroke-width="2.5"/><rect x="1666.0" y="849.0" width="2.5" height="21.5" fill="#d2d2d2"/><rect x="1668.5" y="849.0" width="1" height="21.5" fill="#fff"/><g transform="translate(1696 858.5)"><rect x="-3.5" y="-14" width="7" height="7" rx="1.5" fill="#efefef" stroke="#8a8a8a" stroke-width="1.1" transform="rotate(0)"/><rect x="-3.5" y="-14" width="7" height="7" rx="1.5" fill="#efefef" stroke="#8a8a8a" stroke-width="1.1" transform="rotate(45)"/><rect x="-3.5" y="-14" width="7" height="7" rx="1.5" fill="#efefef" stroke="#8a8a8a" stroke-width="1.1" transform="rotate(90)"/><rect x="-3.5" y="-14" width="7" height="7" rx="1.5" fill="#efefef" stroke="#8a8a8a" stroke-width="1.1" transform="rotate(135)"/><rect x="-3.5" y="-14" width="7" height="7" rx="1.5" fill="#efefef" stroke="#8a8a8a" stroke-width="1.1" transform="rotate(180)"/><rect x="-3.5" y="-14" width="7" height="7" rx="1.5" fill="#efefef" stroke="#8a8a8a" stroke-width="1.1" transform="rotate(225)"/><rect x="-3.5" y="-14" width="7" height="7" rx="1.5" fill="#efefef" stroke="#8a8a8a" stroke-width="1.1" transform="rotate(270)"/><rect x="-3.5" y="-14" width="7" height="7" rx="1.5" fill="#efefef" stroke="#8a8a8a" stroke-width="1.1" transform="rotate(315)"/><circle r="10.5" fill="#efefef" stroke="#8a8a8a" stroke-width="1.1"/><circle r="8" fill="#5b8fd0" stroke="#2f5d9a" stroke-width="1"/><path d="M-2.5 -4L4 0L-2.5 4Z" fill="#fff"/></g><g transform="translate(1700.0 862.0)"><path d="M0 0L0 15L4 11.5L6.5 17L9 16L6.5 10.5L11.5 10.5Z" fill="#fff" stroke="#111" stroke-width="1.3" stroke-linejoin="round"/></g><rect x="1741.5" y="847" width="20" height="24" fill="#fff" stroke="#777" stroke-width="1.5"/><rect x="1741.5" y="847" width="20" height="4.5" fill="#666"/><rect x="1735.5" y="857.5" width="19.5" height="15" fill="#dbe8f5" stroke="#6c98c8" stroke-width="1.5"/><path d="M1738 862h3M1743 862h10M1738 866h3M1743 866h10M1738 870h3M1743 870h10" stroke="#5a85b8" stroke-width="1.3"/><rect x="561.5" y="1295" width="25.5" height="25.5" fill="#eef4fb" stroke="#6c98c8" stroke-width="1.5"/><rect x="562.5" y="1296" width="23.5" height="4.5" fill="#b3d2ee"/><path d="M565 1298h4M571 1298h13" stroke="#5a85b8" stroke-width="2"/><path d="M565 1304.5h4M571 1304.5h13M565 1308.5h4M571 1308.5h13M565 1312.5h4M571 1312.5h13M565 1316.5h4M571 1316.5h13" stroke="#5a85b8" stroke-width="1.3"/><rect x="2189" y="1295" width="25.5" height="25.5" fill="#e8eef5" stroke="#6c98c8" stroke-width="1.5"/><path d="M2192 1302h4M2192 1313h4" stroke="#3e5f85" stroke-width="2"/><rect x="2199" y="1298.5" width="11" height="6" rx="1" fill="#fff" stroke="#6c98c8" stroke-width="1.2"/><rect x="2199" y="1309.5" width="11" height="6" rx="1" fill="#fff" stroke="#6c98c8" stroke-width="1.2"/><rect x="2237.5" y="1295" width="25.5" height="25.5" fill="#eef4fb" stroke="#6c98c8" stroke-width="1.5"/><rect x="2238.5" y="1296" width="23.5" height="4.5" fill="#b3d2ee"/><path d="M2241 1298h4M2247 1298h13" stroke="#5a85b8" stroke-width="2"/><path d="M2241 1304.5h4M2247 1304.5h13M2241 1308.5h4M2247 1308.5h13M2241 1312.5h4M2247 1312.5h13M2241 1316.5h4M2247 1316.5h13" stroke="#5a85b8" stroke-width="1.3"/></svg>
</body></html>
